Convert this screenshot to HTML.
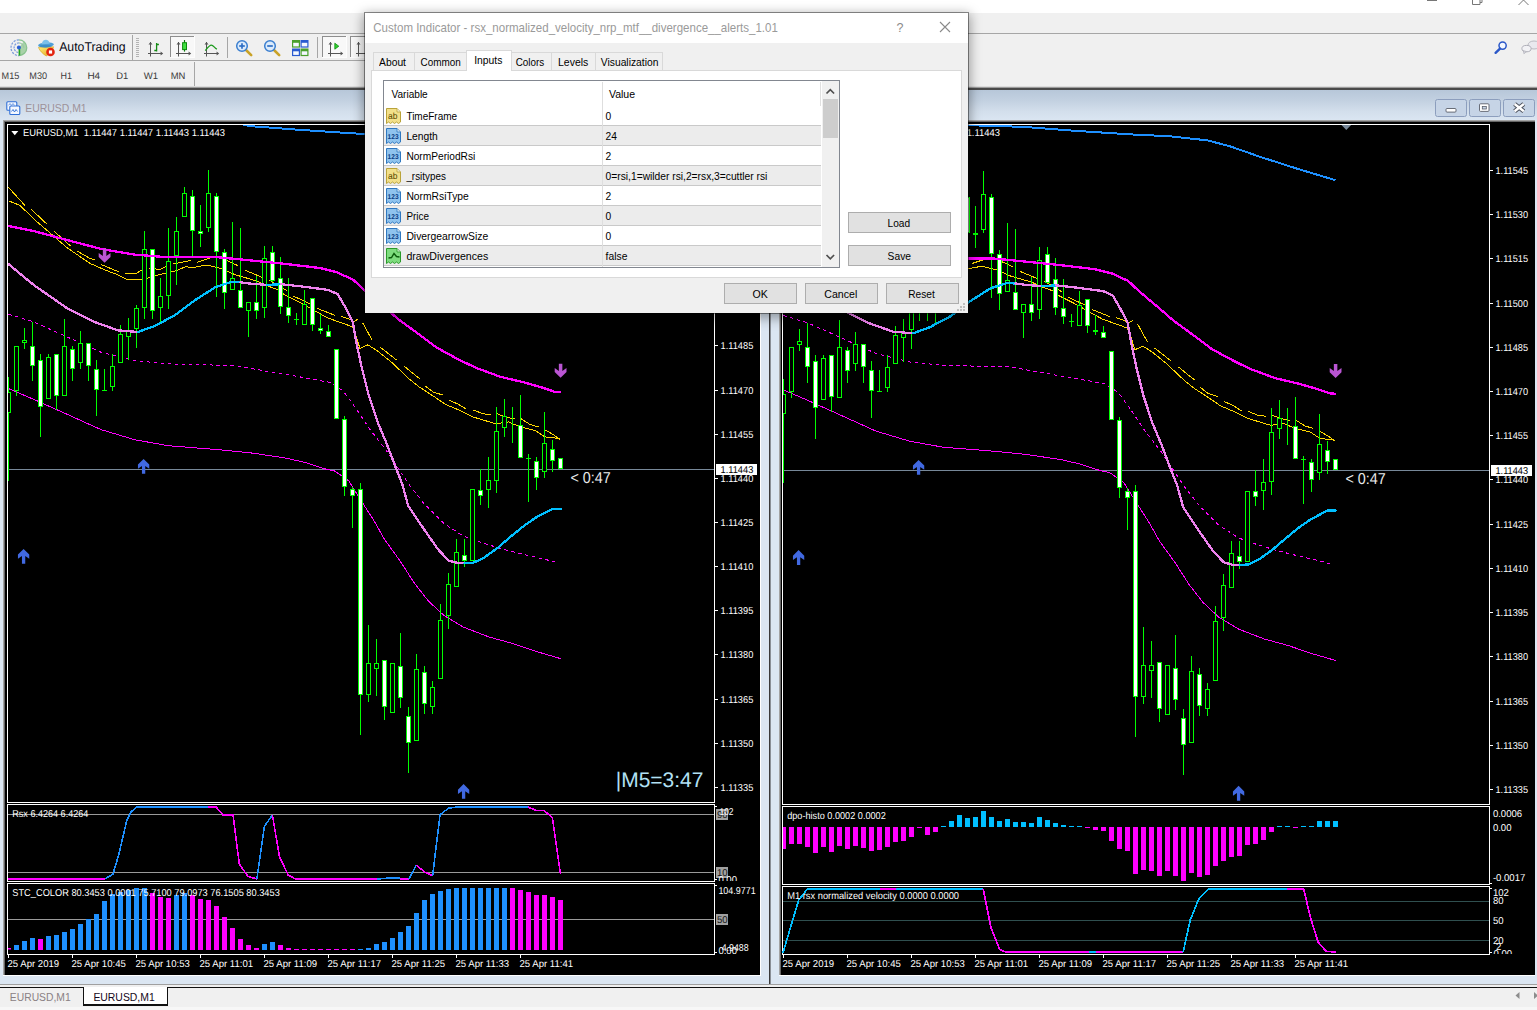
<!DOCTYPE html>
<html><head><meta charset="utf-8"><title>MetaTrader 4 - EURUSD,M1</title>
<style>
html,body{margin:0;padding:0;}
body{width:1537px;height:1010px;overflow:hidden;background:#f0f0f0;font-family:"Liberation Sans",sans-serif;position:relative;}
.t{position:absolute;white-space:pre;}
.abs{position:absolute;}
svg{position:absolute;left:0;top:0;}
svg text{font-family:"Liberation Sans",sans-serif;white-space:pre;text-rendering:geometricPrecision;}
.btn{position:absolute;box-sizing:border-box;border:1px solid #adadad;background:#e1e1e1;}
.tab{position:absolute;box-sizing:border-box;border:1px solid #d9d9d9;border-bottom:none;background:#f0f0f0;}
.row{position:absolute;left:384px;width:437px;height:19px;}
.row.g{background:#efefef;border-top:1px solid #dcdcdc;border-bottom:1px solid #dcdcdc;height:19px;box-sizing:content-box;margin-top:-1px;}
</style></head><body>

<div class="abs" style="left:0;top:0;width:1537px;height:13px;background:#fff"></div>
<div class="abs" style="left:0;top:33px;width:1537px;height:1px;background:#a6a6a6"></div>
<div class="abs" style="left:0;top:60px;width:700px;height:1px;background:#a6a6a6"></div>
<div class="abs" style="left:0;top:86px;width:1537px;height:1px;background:#dcdcdc"></div>
<div class="abs" style="left:0;top:87px;width:1537px;height:1px;background:#9c9c9c"></div>
<div class="abs" style="left:0;top:88px;width:1537px;height:2px;background:#4a4a4a"></div>
<div class="abs" style="left:0;top:90px;width:769px;height:894px;background:#dbe6f2"></div>
<div class="abs" style="left:0;top:90px;width:769px;height:31px;background:linear-gradient(#b7c7d9 0%,#c3d1e1 35%,#d3dfec 70%,#dbe6f2 100%)"></div>
<div class="abs" style="left:769px;top:90px;width:1px;height:896px;background:#3a3a3a"></div>
<div class="abs" style="left:770px;top:90px;width:1px;height:896px;background:#8a8f96"></div>
<div class="abs" style="left:771px;top:90px;width:766px;height:894px;background:#dbe6f2"></div>
<div class="abs" style="left:771px;top:90px;width:766px;height:31px;background:linear-gradient(#b7c7d9 0%,#c3d1e1 35%,#d3dfec 70%,#dbe6f2 100%)"></div>
<div class="abs" style="left:3px;top:120px;width:758px;height:856px;background:#a3a3a3"></div>
<div class="abs" style="left:4px;top:121px;width:757px;height:855px;background:#666666"></div>
<div class="abs" style="left:3px;top:975px;width:758px;height:1px;background:#fff"></div>
<div class="abs" style="left:760px;top:120px;width:1px;height:856px;background:#fff"></div>
<div class="abs" style="left:5px;top:122px;width:755px;height:853px;background:#000"></div>
<div class="abs" style="left:779px;top:120px;width:758px;height:856px;background:#a3a3a3"></div>
<div class="abs" style="left:780px;top:121px;width:757px;height:855px;background:#666666"></div>
<div class="abs" style="left:779px;top:975px;width:758px;height:1px;background:#fff"></div>
<div class="abs" style="left:781px;top:122px;width:754px;height:853px;background:#000"></div>
<div class="abs" style="left:1535px;top:120px;width:2px;height:856px;background:#dbe6f2"></div>
<div class="abs" style="left:0;top:984px;width:1537px;height:1px;background:#a0a0a0"></div>
<div class="abs" style="left:0;top:985px;width:1537px;height:25px;background:#f0f0f0"></div>
<div class="abs" style="left:0;top:987px;width:1537px;height:1px;background:#111"></div>
<div class="abs" style="left:83px;top:987px;width:85px;height:19px;box-sizing:border-box;background:#fff;border:1px solid #111;border-top:none;border-width:0 1px 2px 1px"></div>
<div class="abs" style="left:0;top:1007px;width:1537px;height:3px;background:#f7f7f7"></div>
<span class="t" style="left:9.80px;top:992px;font-size:10.357px;line-height:11px;height:11px;color:#8a8084;transform:scaleY(1.1297);transform-origin:0 9px;">EURUSD,M1</span>
<span class="t" style="left:93.40px;top:992px;font-size:10.425px;line-height:11px;height:11px;color:#150820;transform:scaleY(1.1223);transform-origin:0 9px;">EURUSD,M1</span>
<svg width="1537" height="1010" viewBox="0 0 1537 1010" style="pointer-events:none">
<path d="M1519.5,992 l-4,3.5 l4,3.5z" fill="#8c8c8c"/><path d="M1534,992 l4,3.5 l-4,3.5z" fill="#8c8c8c"/>
</svg>
<span class="t" style="left:25.20px;top:103px;font-size:10.442px;line-height:11px;height:11px;color:#9d9299;transform:scaleY(1.0918);transform-origin:0 9px;">EURUSD,M1</span>
<svg width="1537" height="1010" viewBox="0 0 1537 1010">
<defs><clipPath id="cl"><rect x="8" y="125" width="706" height="677"/></clipPath><clipPath id="cr"><rect x="783" y="125" width="706" height="679"/></clipPath></defs>
<g clip-path="url(#cl)">
<rect x="8.00" y="469.00" width="706.00" height="1.00" fill="#778899" />
<polyline points="8.4,388.5 33.6,399.3 67.3,414.4 101.0,429.6 134.6,439.7 168.2,445.7 218.7,449.7 252.4,453.1 286.0,458.1 305.0,462.4 325.0,468.9 334.9,471.1 348.8,481.0 360.6,499.8 374.5,521.5 384.4,539.3 400.2,561.1 414.1,582.8 428.0,600.6 443.8,615.4 463.6,627.2 489.4,637.1 513.2,643.6 535.0,651.1 560.6,658.6" fill="none" stroke="#ff00ff" stroke-width="1" shape-rendering="crispEdges" />
<polyline points="8.4,314.1 33.6,321.9 67.3,337.0 101.0,352.2 134.6,360.6 168.2,363.9 235.5,365.6 269.2,371.7 302.8,377.4 329.7,382.4 343.2,390.9 356.7,409.4 370.1,429.6 387.0,451.4 394.3,462.2 410.1,485.9 424.0,503.7 443.8,523.4 463.6,536.3 483.4,543.3 503.2,549.2 525.0,554.7 545.0,559.3 559.0,563.2" fill="none" stroke="#ff00ff" stroke-width="1" stroke-dasharray="3.5 3.5" shape-rendering="crispEdges" />
<polyline points="8.4,200.8 20.0,205.4 34.5,219.6 67.3,247.9 90.0,263.4 106.0,270.4 117.8,274.8 126.7,279.2 144.6,279.2 158.8,274.8 174.9,271.2 185.5,266.7 192.7,267.6 206.9,265.0 221.2,268.5 235.4,274.8 256.8,281.0 265.2,285.1 277.7,289.6 284.8,294.9 299.1,302.0 313.3,310.0 327.6,317.9 345.4,324.2 352.5,326.9 356.3,336.8 359.9,348.4 367.9,344.8 377.7,351.1 391.9,362.6 409.8,379.5 418.7,386.6 436.5,398.2 445.4,404.4 460.8,410.8 473.5,417.1 495.7,423.8 508.4,421.9 519.5,426.6 535.3,430.6 544.8,436.9 559.0,438.5" fill="none" stroke="#ffd700" stroke-width="1" shape-rendering="crispEdges" />
<polyline points="8.4,187.3 25.0,205.6" fill="none" stroke="#ffd700" stroke-width="1" shape-rendering="crispEdges" />
<polyline points="31.3,209.3 47.1,224.3" fill="none" stroke="#ffd700" stroke-width="1" shape-rendering="crispEdges" />
<polyline points="53.8,231.0 70.7,246.2" fill="none" stroke="#ffd700" stroke-width="1" shape-rendering="crispEdges" />
<polyline points="77.4,251.2 90.0,258.5 95.0,259.6" fill="none" stroke="#ffd700" stroke-width="1" shape-rendering="crispEdges" />
<polyline points="101.0,264.5 115.2,270.4 119.4,271.8" fill="none" stroke="#ffd700" stroke-width="1" shape-rendering="crispEdges" />
<polyline points="125.0,273.3 135.6,273.9 142.8,269.4" fill="none" stroke="#ffd700" stroke-width="1" shape-rendering="crispEdges" />
<polyline points="149.0,268.5 160.6,269.4 166.8,265.8" fill="none" stroke="#ffd700" stroke-width="1" shape-rendering="crispEdges" />
<polyline points="173.0,264.0 190.9,260.5" fill="none" stroke="#ffd700" stroke-width="1" shape-rendering="crispEdges" />
<polyline points="197.1,262.3 214.0,256.6" fill="none" stroke="#ffd700" stroke-width="1" shape-rendering="crispEdges" />
<polyline points="221.2,257.8 238.1,265.8" fill="none" stroke="#ffd700" stroke-width="1" shape-rendering="crispEdges" />
<polyline points="245.3,270.3 262.2,277.4" fill="none" stroke="#ffd700" stroke-width="1" shape-rendering="crispEdges" />
<polyline points="268.8,279.8 286.6,290.5" fill="none" stroke="#ffd700" stroke-width="1" shape-rendering="crispEdges" />
<polyline points="292.8,295.8 309.8,303.7" fill="none" stroke="#ffd700" stroke-width="1" shape-rendering="crispEdges" />
<polyline points="316.9,308.2 334.7,315.3" fill="none" stroke="#ffd700" stroke-width="1" shape-rendering="crispEdges" />
<polyline points="340.9,316.2 349.2,319.0 353.6,321.7 358.1,319.0" fill="none" stroke="#ffd700" stroke-width="1" shape-rendering="crispEdges" />
<polyline points="362.5,322.6 367.0,330.7 372.3,340.4" fill="none" stroke="#ffd700" stroke-width="1" shape-rendering="crispEdges" />
<polyline points="379.5,346.6 396.4,359.9" fill="none" stroke="#ffd700" stroke-width="1" shape-rendering="crispEdges" />
<polyline points="403.5,365.6 412.0,372.6 419.6,378.6" fill="none" stroke="#ffd700" stroke-width="1" shape-rendering="crispEdges" />
<polyline points="424.9,385.7 433.0,392.0 442.7,395.0" fill="none" stroke="#ffd700" stroke-width="1" shape-rendering="crispEdges" />
<polyline points="449.0,400.0 458.0,404.1 466.4,409.2" fill="none" stroke="#ffd700" stroke-width="1" shape-rendering="crispEdges" />
<polyline points="473.5,410.0 483.0,413.8 491.0,414.7" fill="none" stroke="#ffd700" stroke-width="1" shape-rendering="crispEdges" />
<polyline points="497.3,413.9 506.0,417.0 514.7,419.0" fill="none" stroke="#ffd700" stroke-width="1" shape-rendering="crispEdges" />
<polyline points="521.0,418.7 530.0,424.5 538.5,426.9" fill="none" stroke="#ffd700" stroke-width="1" shape-rendering="crispEdges" />
<polyline points="544.8,429.8 553.0,434.5 559.8,439.3" fill="none" stroke="#ffd700" stroke-width="1" shape-rendering="crispEdges" />
<rect x="8.00" y="377.00" width="1.00" height="104.00" fill="#00ff00" />
<rect x="6.00" y="392.00" width="5.00" height="21.00" fill="#00ff00" />
<rect x="7.00" y="393.00" width="3.00" height="19.00" fill="#000" />
<rect x="16.00" y="346.00" width="1.00" height="50.00" fill="#00ff00" />
<rect x="14.00" y="346.00" width="5.00" height="45.00" fill="#00ff00" />
<rect x="15.00" y="347.00" width="3.00" height="43.00" fill="#000" />
<rect x="24.00" y="328.00" width="1.00" height="21.00" fill="#00ff00" />
<rect x="22.00" y="340.00" width="5.00" height="3.00" fill="#00ff00" />
<rect x="23.00" y="341.00" width="3.00" height="1.00" fill="#000" />
<rect x="32.00" y="322.00" width="1.00" height="59.00" fill="#00ff00" />
<rect x="30.00" y="346.00" width="5.00" height="20.00" fill="#00ff00" />
<rect x="31.00" y="347.00" width="3.00" height="18.00" fill="#fff" />
<rect x="40.00" y="354.00" width="1.00" height="83.00" fill="#00ff00" />
<rect x="38.00" y="360.00" width="5.00" height="47.00" fill="#00ff00" />
<rect x="39.00" y="361.00" width="3.00" height="45.00" fill="#fff" />
<rect x="48.00" y="354.00" width="1.00" height="45.00" fill="#00ff00" />
<rect x="46.00" y="357.00" width="5.00" height="42.00" fill="#00ff00" />
<rect x="47.00" y="358.00" width="3.00" height="40.00" fill="#000" />
<rect x="56.00" y="354.00" width="1.00" height="56.00" fill="#00ff00" />
<rect x="54.00" y="354.00" width="5.00" height="42.00" fill="#00ff00" />
<rect x="55.00" y="355.00" width="3.00" height="40.00" fill="#fff" />
<rect x="64.00" y="319.00" width="1.00" height="77.00" fill="#00ff00" />
<rect x="62.00" y="346.00" width="5.00" height="50.00" fill="#00ff00" />
<rect x="63.00" y="347.00" width="3.00" height="48.00" fill="#000" />
<rect x="72.00" y="346.00" width="1.00" height="35.00" fill="#00ff00" />
<rect x="70.00" y="349.00" width="5.00" height="20.00" fill="#00ff00" />
<rect x="71.00" y="350.00" width="3.00" height="18.00" fill="#fff" />
<rect x="80.00" y="331.00" width="1.00" height="38.00" fill="#00ff00" />
<rect x="78.00" y="343.00" width="5.00" height="20.00" fill="#00ff00" />
<rect x="79.00" y="344.00" width="3.00" height="18.00" fill="#000" />
<rect x="88.00" y="343.00" width="1.00" height="38.00" fill="#00ff00" />
<rect x="86.00" y="343.00" width="5.00" height="23.00" fill="#00ff00" />
<rect x="87.00" y="344.00" width="3.00" height="21.00" fill="#fff" />
<rect x="96.00" y="360.00" width="1.00" height="56.00" fill="#00ff00" />
<rect x="94.00" y="369.00" width="5.00" height="21.00" fill="#00ff00" />
<rect x="95.00" y="370.00" width="3.00" height="19.00" fill="#fff" />
<rect x="104.00" y="369.00" width="1.00" height="21.00" fill="#00ff00" />
<rect x="102.00" y="390.00" width="5.00" height="1.00" fill="#00ff00" />
<rect x="112.00" y="354.00" width="1.00" height="37.00" fill="#00ff00" />
<rect x="110.00" y="366.00" width="5.00" height="21.00" fill="#00ff00" />
<rect x="111.00" y="367.00" width="3.00" height="19.00" fill="#000" />
<rect x="120.00" y="325.00" width="1.00" height="38.00" fill="#00ff00" />
<rect x="118.00" y="334.00" width="5.00" height="29.00" fill="#00ff00" />
<rect x="119.00" y="335.00" width="3.00" height="27.00" fill="#000" />
<rect x="128.00" y="318.00" width="1.00" height="42.00" fill="#00ff00" />
<rect x="126.00" y="331.00" width="5.00" height="6.00" fill="#00ff00" />
<rect x="127.00" y="332.00" width="3.00" height="4.00" fill="#000" />
<rect x="136.00" y="305.00" width="1.00" height="43.00" fill="#00ff00" />
<rect x="134.00" y="308.00" width="5.00" height="21.00" fill="#00ff00" />
<rect x="135.00" y="309.00" width="3.00" height="19.00" fill="#000" />
<rect x="144.00" y="231.00" width="1.00" height="88.00" fill="#00ff00" />
<rect x="142.00" y="249.00" width="5.00" height="59.00" fill="#00ff00" />
<rect x="143.00" y="250.00" width="3.00" height="57.00" fill="#000" />
<rect x="152.00" y="249.00" width="1.00" height="70.00" fill="#00ff00" />
<rect x="150.00" y="249.00" width="5.00" height="62.00" fill="#00ff00" />
<rect x="151.00" y="250.00" width="3.00" height="60.00" fill="#fff" />
<rect x="160.00" y="278.00" width="1.00" height="45.00" fill="#00ff00" />
<rect x="158.00" y="296.00" width="5.00" height="12.00" fill="#00ff00" />
<rect x="159.00" y="297.00" width="3.00" height="10.00" fill="#000" />
<rect x="168.00" y="228.00" width="1.00" height="81.00" fill="#00ff00" />
<rect x="166.00" y="261.00" width="5.00" height="35.00" fill="#00ff00" />
<rect x="167.00" y="262.00" width="3.00" height="33.00" fill="#000" />
<rect x="176.00" y="217.00" width="1.00" height="68.00" fill="#00ff00" />
<rect x="174.00" y="231.00" width="5.00" height="25.00" fill="#00ff00" />
<rect x="175.00" y="232.00" width="3.00" height="23.00" fill="#000" />
<rect x="184.00" y="187.00" width="1.00" height="30.00" fill="#00ff00" />
<rect x="182.00" y="193.00" width="5.00" height="24.00" fill="#00ff00" />
<rect x="183.00" y="194.00" width="3.00" height="22.00" fill="#000" />
<rect x="192.00" y="190.00" width="1.00" height="66.00" fill="#00ff00" />
<rect x="190.00" y="196.00" width="5.00" height="35.00" fill="#00ff00" />
<rect x="191.00" y="197.00" width="3.00" height="33.00" fill="#fff" />
<rect x="200.00" y="205.00" width="1.00" height="42.00" fill="#00ff00" />
<rect x="198.00" y="231.00" width="5.00" height="3.00" fill="#00ff00" />
<rect x="199.00" y="232.00" width="3.00" height="1.00" fill="#fff" />
<rect x="208.00" y="170.00" width="1.00" height="62.00" fill="#00ff00" />
<rect x="206.00" y="193.00" width="5.00" height="35.00" fill="#00ff00" />
<rect x="207.00" y="194.00" width="3.00" height="33.00" fill="#000" />
<rect x="216.00" y="193.00" width="1.00" height="104.00" fill="#00ff00" />
<rect x="214.00" y="196.00" width="5.00" height="56.00" fill="#00ff00" />
<rect x="215.00" y="197.00" width="3.00" height="54.00" fill="#fff" />
<rect x="224.00" y="249.00" width="1.00" height="60.00" fill="#00ff00" />
<rect x="222.00" y="252.00" width="5.00" height="41.00" fill="#00ff00" />
<rect x="223.00" y="253.00" width="3.00" height="39.00" fill="#fff" />
<rect x="232.00" y="222.00" width="1.00" height="68.00" fill="#00ff00" />
<rect x="230.00" y="278.00" width="5.00" height="12.00" fill="#00ff00" />
<rect x="231.00" y="279.00" width="3.00" height="10.00" fill="#000" />
<rect x="240.00" y="228.00" width="1.00" height="80.00" fill="#00ff00" />
<rect x="238.00" y="290.00" width="5.00" height="18.00" fill="#00ff00" />
<rect x="239.00" y="291.00" width="3.00" height="16.00" fill="#fff" />
<rect x="248.00" y="302.00" width="1.00" height="35.00" fill="#00ff00" />
<rect x="246.00" y="302.00" width="5.00" height="9.00" fill="#00ff00" />
<rect x="247.00" y="303.00" width="3.00" height="7.00" fill="#000" />
<rect x="256.00" y="276.00" width="1.00" height="43.00" fill="#00ff00" />
<rect x="254.00" y="302.00" width="5.00" height="9.00" fill="#00ff00" />
<rect x="255.00" y="303.00" width="3.00" height="7.00" fill="#fff" />
<rect x="264.00" y="246.00" width="1.00" height="72.00" fill="#00ff00" />
<rect x="262.00" y="258.00" width="5.00" height="50.00" fill="#00ff00" />
<rect x="263.00" y="259.00" width="3.00" height="48.00" fill="#000" />
<rect x="272.00" y="246.00" width="1.00" height="36.00" fill="#00ff00" />
<rect x="270.00" y="252.00" width="5.00" height="29.00" fill="#00ff00" />
<rect x="271.00" y="253.00" width="3.00" height="27.00" fill="#fff" />
<rect x="280.00" y="257.00" width="1.00" height="57.00" fill="#00ff00" />
<rect x="278.00" y="278.00" width="5.00" height="29.00" fill="#00ff00" />
<rect x="279.00" y="279.00" width="3.00" height="27.00" fill="#fff" />
<rect x="288.00" y="278.00" width="1.00" height="45.00" fill="#00ff00" />
<rect x="286.00" y="307.00" width="5.00" height="9.00" fill="#00ff00" />
<rect x="287.00" y="308.00" width="3.00" height="7.00" fill="#fff" />
<rect x="296.00" y="313.00" width="1.00" height="12.00" fill="#00ff00" />
<rect x="294.00" y="319.00" width="5.00" height="1.00" fill="#00ff00" />
<rect x="304.00" y="290.00" width="1.00" height="35.00" fill="#00ff00" />
<rect x="302.00" y="304.00" width="5.00" height="21.00" fill="#00ff00" />
<rect x="303.00" y="305.00" width="3.00" height="19.00" fill="#000" />
<rect x="312.00" y="298.00" width="1.00" height="33.00" fill="#00ff00" />
<rect x="310.00" y="298.00" width="5.00" height="27.00" fill="#00ff00" />
<rect x="311.00" y="299.00" width="3.00" height="25.00" fill="#fff" />
<rect x="320.00" y="314.00" width="1.00" height="20.00" fill="#00ff00" />
<rect x="318.00" y="328.00" width="5.00" height="3.00" fill="#00ff00" />
<rect x="319.00" y="329.00" width="3.00" height="1.00" fill="#fff" />
<rect x="328.00" y="325.00" width="1.00" height="12.00" fill="#00ff00" />
<rect x="326.00" y="331.00" width="5.00" height="6.00" fill="#00ff00" />
<rect x="327.00" y="332.00" width="3.00" height="4.00" fill="#fff" />
<rect x="336.00" y="349.00" width="1.00" height="70.00" fill="#00ff00" />
<rect x="334.00" y="349.00" width="5.00" height="70.00" fill="#00ff00" />
<rect x="335.00" y="350.00" width="3.00" height="68.00" fill="#fff" />
<rect x="344.00" y="416.00" width="1.00" height="80.00" fill="#00ff00" />
<rect x="342.00" y="419.00" width="5.00" height="68.00" fill="#00ff00" />
<rect x="343.00" y="420.00" width="3.00" height="66.00" fill="#fff" />
<rect x="352.00" y="487.00" width="1.00" height="41.00" fill="#00ff00" />
<rect x="350.00" y="489.00" width="5.00" height="7.00" fill="#00ff00" />
<rect x="351.00" y="490.00" width="3.00" height="5.00" fill="#fff" />
<rect x="360.00" y="483.00" width="1.00" height="252.00" fill="#00ff00" />
<rect x="358.00" y="489.00" width="5.00" height="206.00" fill="#00ff00" />
<rect x="359.00" y="490.00" width="3.00" height="204.00" fill="#fff" />
<rect x="368.00" y="625.00" width="1.00" height="77.00" fill="#00ff00" />
<rect x="366.00" y="663.00" width="5.00" height="32.00" fill="#00ff00" />
<rect x="367.00" y="664.00" width="3.00" height="30.00" fill="#000" />
<rect x="376.00" y="639.00" width="1.00" height="57.00" fill="#00ff00" />
<rect x="374.00" y="663.00" width="5.00" height="6.00" fill="#00ff00" />
<rect x="375.00" y="664.00" width="3.00" height="4.00" fill="#000" />
<rect x="384.00" y="660.00" width="1.00" height="60.00" fill="#00ff00" />
<rect x="382.00" y="660.00" width="5.00" height="47.00" fill="#00ff00" />
<rect x="383.00" y="661.00" width="3.00" height="45.00" fill="#fff" />
<rect x="392.00" y="663.00" width="1.00" height="50.00" fill="#00ff00" />
<rect x="390.00" y="663.00" width="5.00" height="50.00" fill="#00ff00" />
<rect x="391.00" y="664.00" width="3.00" height="48.00" fill="#000" />
<rect x="400.00" y="633.00" width="1.00" height="75.00" fill="#00ff00" />
<rect x="398.00" y="666.00" width="5.00" height="32.00" fill="#00ff00" />
<rect x="399.00" y="667.00" width="3.00" height="30.00" fill="#fff" />
<rect x="408.00" y="707.00" width="1.00" height="66.00" fill="#00ff00" />
<rect x="406.00" y="716.00" width="5.00" height="27.00" fill="#00ff00" />
<rect x="407.00" y="717.00" width="3.00" height="25.00" fill="#fff" />
<rect x="416.00" y="654.00" width="1.00" height="87.00" fill="#00ff00" />
<rect x="414.00" y="669.00" width="5.00" height="72.00" fill="#00ff00" />
<rect x="415.00" y="670.00" width="3.00" height="70.00" fill="#000" />
<rect x="424.00" y="666.00" width="1.00" height="48.00" fill="#00ff00" />
<rect x="422.00" y="672.00" width="5.00" height="32.00" fill="#00ff00" />
<rect x="423.00" y="673.00" width="3.00" height="30.00" fill="#fff" />
<rect x="432.00" y="681.00" width="1.00" height="33.00" fill="#00ff00" />
<rect x="430.00" y="687.00" width="5.00" height="20.00" fill="#00ff00" />
<rect x="431.00" y="688.00" width="3.00" height="18.00" fill="#000" />
<rect x="440.00" y="604.00" width="1.00" height="75.00" fill="#00ff00" />
<rect x="438.00" y="620.00" width="5.00" height="59.00" fill="#00ff00" />
<rect x="439.00" y="621.00" width="3.00" height="57.00" fill="#000" />
<rect x="448.00" y="573.00" width="1.00" height="56.00" fill="#00ff00" />
<rect x="446.00" y="584.00" width="5.00" height="32.00" fill="#00ff00" />
<rect x="447.00" y="585.00" width="3.00" height="30.00" fill="#000" />
<rect x="456.00" y="539.00" width="1.00" height="48.00" fill="#00ff00" />
<rect x="454.00" y="552.00" width="5.00" height="35.00" fill="#00ff00" />
<rect x="455.00" y="553.00" width="3.00" height="33.00" fill="#000" />
<rect x="464.00" y="539.00" width="1.00" height="28.00" fill="#00ff00" />
<rect x="462.00" y="555.00" width="5.00" height="6.00" fill="#00ff00" />
<rect x="463.00" y="556.00" width="3.00" height="4.00" fill="#fff" />
<rect x="472.00" y="489.00" width="1.00" height="72.00" fill="#00ff00" />
<rect x="470.00" y="489.00" width="5.00" height="72.00" fill="#00ff00" />
<rect x="471.00" y="490.00" width="3.00" height="70.00" fill="#000" />
<rect x="480.00" y="469.00" width="1.00" height="36.00" fill="#00ff00" />
<rect x="478.00" y="490.00" width="5.00" height="6.00" fill="#00ff00" />
<rect x="479.00" y="491.00" width="3.00" height="4.00" fill="#fff" />
<rect x="488.00" y="457.00" width="1.00" height="51.00" fill="#00ff00" />
<rect x="486.00" y="480.00" width="5.00" height="10.00" fill="#00ff00" />
<rect x="487.00" y="481.00" width="3.00" height="8.00" fill="#000" />
<rect x="496.00" y="407.00" width="1.00" height="86.00" fill="#00ff00" />
<rect x="494.00" y="431.00" width="5.00" height="50.00" fill="#00ff00" />
<rect x="495.00" y="432.00" width="3.00" height="48.00" fill="#000" />
<rect x="504.00" y="399.00" width="1.00" height="38.00" fill="#00ff00" />
<rect x="502.00" y="416.00" width="5.00" height="12.00" fill="#00ff00" />
<rect x="503.00" y="417.00" width="3.00" height="10.00" fill="#000" />
<rect x="512.00" y="407.00" width="1.00" height="36.00" fill="#00ff00" />
<rect x="520.00" y="395.00" width="1.00" height="63.00" fill="#00ff00" />
<rect x="518.00" y="425.00" width="5.00" height="33.00" fill="#00ff00" />
<rect x="519.00" y="426.00" width="3.00" height="31.00" fill="#fff" />
<rect x="528.00" y="454.00" width="1.00" height="48.00" fill="#00ff00" />
<rect x="526.00" y="458.00" width="5.00" height="1.00" fill="#00ff00" />
<rect x="536.00" y="457.00" width="1.00" height="33.00" fill="#00ff00" />
<rect x="534.00" y="461.00" width="5.00" height="17.00" fill="#00ff00" />
<rect x="535.00" y="462.00" width="3.00" height="15.00" fill="#fff" />
<rect x="544.00" y="412.00" width="1.00" height="66.00" fill="#00ff00" />
<rect x="542.00" y="443.00" width="5.00" height="29.00" fill="#00ff00" />
<rect x="543.00" y="444.00" width="3.00" height="27.00" fill="#000" />
<rect x="552.00" y="440.00" width="1.00" height="32.00" fill="#00ff00" />
<rect x="550.00" y="449.00" width="5.00" height="12.00" fill="#00ff00" />
<rect x="551.00" y="450.00" width="3.00" height="10.00" fill="#fff" />
<rect x="560.00" y="458.00" width="1.00" height="11.00" fill="#00ff00" />
<rect x="558.00" y="458.00" width="5.00" height="11.00" fill="#00ff00" />
<rect x="559.00" y="459.00" width="3.00" height="9.00" fill="#fff" />
<polyline points="243.0,124.4 248.8,126.0 297.6,129.7 353.9,133.4 395.2,135.4 432.7,139.5 455.3,145.4 485.3,155.9 522.8,167.9 560.4,179.2" fill="none" stroke="#1e90ff" stroke-width="2" shape-rendering="crispEdges" />
<polyline points="8.4,226.0 33.6,231.0 67.3,240.1 101.0,248.9 134.6,254.6 168.2,257.3 218.7,257.3 252.4,260.6 286.0,264.0 319.7,268.0 336.5,272.1 353.3,279.8 364.0,290.0 379.6,303.0 399.2,319.9 418.7,334.1 436.5,347.5 454.3,357.2 465.0,362.6 476.7,368.1 500.4,376.8 524.2,382.4 543.2,387.9 555.9,392.2 560.6,392.3" fill="none" stroke="#ff00ff" stroke-width="2.3" shape-rendering="crispEdges" stroke-linejoin="round"/>
<polyline points="8.4,264.0 33.6,284.9 67.3,308.4 94.2,321.9 117.8,330.3 138.0,332.0" fill="none" stroke="#ee82ee" stroke-width="2.3" shape-rendering="crispEdges" stroke-linejoin="round" stroke-linecap="round"/>
<polyline points="138.0,332.0 154.8,325.9 175.0,315.2 195.2,300.0 215.3,287.2 232.0,281.8 240.5,282.3" fill="none" stroke="#00bfff" stroke-width="2.3" shape-rendering="crispEdges" stroke-linejoin="round" stroke-linecap="round"/>
<polyline points="240.5,282.3 250.0,283.6 267.0,284.9" fill="none" stroke="#ee82ee" stroke-width="2.3" shape-rendering="crispEdges" stroke-linejoin="round" stroke-linecap="round"/>
<polyline points="267.0,284.9 281.2,284.2" fill="none" stroke="#00bfff" stroke-width="2.3" shape-rendering="crispEdges" stroke-linejoin="round" stroke-linecap="round"/>
<polyline points="281.2,284.2 302.8,286.6 328.0,289.9 337.6,294.1 345.0,306.7 352.7,321.7 356.3,342.2 361.6,367.0 368.8,395.6 377.7,422.2 386.6,443.5 394.4,464.1 402.2,483.9 408.2,505.7 424.0,529.3 437.9,549.2 448.8,560.7 457.7,563.0 464.6,563.3" fill="none" stroke="#ee82ee" stroke-width="2.3" shape-rendering="crispEdges" stroke-linejoin="round" stroke-linecap="round"/>
<polyline points="464.6,563.3 473.5,562.7 483.4,558.1 497.3,548.2 511.1,536.3 525.0,525.0 536.0,517.5 552.7,508.9 560.6,508.9" fill="none" stroke="#00bfff" stroke-width="2.3" shape-rendering="crispEdges" stroke-linejoin="round" stroke-linecap="round"/>
<path d="M104.60,262.80 l-5.9,-5.7 v-4.15 l4.15,2.95 v-7.1 h3.5 v7.1 l4.15,-2.95 v4.15z" fill="#ba55d3"/>
<path d="M143.60,458.90 l-5.65,5.65 v4.3 l4,-2.8 v7.7 h3.3 v-7.7 l4,2.8 v-4.3z" fill="#4169e1"/>
<path d="M23.60,548.90 l-5.65,5.65 v4.3 l4,-2.8 v7.7 h3.3 v-7.7 l4,2.8 v-4.3z" fill="#4169e1"/>
<path d="M463.60,784.00 l-5.65,5.65 v4.3 l4,-2.8 v7.7 h3.3 v-7.7 l4,2.8 v-4.3z" fill="#4169e1"/>
<path d="M560.60,377.80 l-5.9,-5.7 v-4.15 l4.15,2.95 v-7.1 h3.5 v7.1 l4.15,-2.95 v4.15z" fill="#ba55d3"/>
</g>
<g clip-path="url(#cr)">
<rect x="783.00" y="470.00" width="706.00" height="1.00" fill="#778899" />
<polyline points="783.4,389.9 808.6,400.7 842.3,415.9 876.0,431.1 909.6,441.2 943.2,447.2 993.7,451.2 1027.4,454.6 1061.0,459.6 1080.0,464.0 1100.0,470.5 1109.9,472.7 1123.8,482.6 1135.6,501.4 1149.5,523.2 1159.4,541.0 1175.2,562.8 1189.1,584.6 1203.0,602.4 1218.8,617.2 1238.6,629.1 1264.4,639.0 1288.2,645.5 1310.0,653.0 1335.6,660.5" fill="none" stroke="#ff00ff" stroke-width="1" shape-rendering="crispEdges" />
<polyline points="783.4,315.4 808.6,323.2 842.3,338.3 876.0,353.5 909.6,362.0 943.2,365.3 1010.5,367.0 1044.2,373.1 1077.8,378.8 1104.7,383.8 1118.2,392.3 1131.7,410.9 1145.1,431.1 1162.0,452.9 1169.3,463.8 1185.1,487.5 1199.0,505.3 1218.8,525.1 1238.6,538.0 1258.4,545.0 1278.2,550.9 1300.0,556.4 1320.0,561.0 1334.0,565.0" fill="none" stroke="#ff00ff" stroke-width="1" stroke-dasharray="3.5 3.5" shape-rendering="crispEdges" />
<polyline points="783.4,201.9 795.0,206.5 809.5,220.7 842.3,249.0 865.0,264.6 881.0,271.6 892.8,276.0 901.7,280.4 919.6,280.4 933.8,276.0 949.9,272.4 960.5,267.9 967.7,268.8 981.9,266.2 996.2,269.7 1010.4,276.0 1031.8,282.2 1040.2,286.3 1052.7,290.8 1059.8,296.1 1074.1,303.3 1088.3,311.3 1102.6,319.2 1120.4,325.5 1127.5,328.2 1131.3,338.1 1134.9,349.7 1142.9,346.1 1152.7,352.4 1166.9,364.0 1184.8,380.9 1193.7,388.0 1211.5,399.6 1220.4,405.8 1235.8,412.3 1248.5,418.6 1270.7,425.3 1283.4,423.4 1294.5,428.1 1310.3,432.1 1319.8,438.4 1334.0,440.0" fill="none" stroke="#ffd700" stroke-width="1" shape-rendering="crispEdges" />
<polyline points="783.4,188.3 800.0,206.7" fill="none" stroke="#ffd700" stroke-width="1" shape-rendering="crispEdges" />
<polyline points="806.3,210.4 822.1,225.4" fill="none" stroke="#ffd700" stroke-width="1" shape-rendering="crispEdges" />
<polyline points="828.8,232.1 845.7,247.3" fill="none" stroke="#ffd700" stroke-width="1" shape-rendering="crispEdges" />
<polyline points="852.4,252.4 865.0,259.7 870.0,260.8" fill="none" stroke="#ffd700" stroke-width="1" shape-rendering="crispEdges" />
<polyline points="876.0,265.7 890.2,271.6 894.4,273.0" fill="none" stroke="#ffd700" stroke-width="1" shape-rendering="crispEdges" />
<polyline points="900.0,274.5 910.6,275.1 917.8,270.6" fill="none" stroke="#ffd700" stroke-width="1" shape-rendering="crispEdges" />
<polyline points="924.0,269.7 935.6,270.6 941.8,267.0" fill="none" stroke="#ffd700" stroke-width="1" shape-rendering="crispEdges" />
<polyline points="948.0,265.2 965.9,261.7" fill="none" stroke="#ffd700" stroke-width="1" shape-rendering="crispEdges" />
<polyline points="972.1,263.5 989.0,257.8" fill="none" stroke="#ffd700" stroke-width="1" shape-rendering="crispEdges" />
<polyline points="996.2,259.0 1013.1,267.0" fill="none" stroke="#ffd700" stroke-width="1" shape-rendering="crispEdges" />
<polyline points="1020.3,271.5 1037.2,278.6" fill="none" stroke="#ffd700" stroke-width="1" shape-rendering="crispEdges" />
<polyline points="1043.8,281.0 1061.6,291.7" fill="none" stroke="#ffd700" stroke-width="1" shape-rendering="crispEdges" />
<polyline points="1067.8,297.0 1084.8,305.0" fill="none" stroke="#ffd700" stroke-width="1" shape-rendering="crispEdges" />
<polyline points="1091.9,309.5 1109.7,316.6" fill="none" stroke="#ffd700" stroke-width="1" shape-rendering="crispEdges" />
<polyline points="1115.9,317.5 1124.2,320.3 1128.6,323.0 1133.1,320.3" fill="none" stroke="#ffd700" stroke-width="1" shape-rendering="crispEdges" />
<polyline points="1137.5,323.9 1142.0,332.0 1147.3,341.7" fill="none" stroke="#ffd700" stroke-width="1" shape-rendering="crispEdges" />
<polyline points="1154.5,347.9 1171.4,361.3" fill="none" stroke="#ffd700" stroke-width="1" shape-rendering="crispEdges" />
<polyline points="1178.5,367.0 1187.0,374.0 1194.6,380.0" fill="none" stroke="#ffd700" stroke-width="1" shape-rendering="crispEdges" />
<polyline points="1199.9,387.1 1208.0,393.4 1217.7,396.4" fill="none" stroke="#ffd700" stroke-width="1" shape-rendering="crispEdges" />
<polyline points="1224.0,401.4 1233.0,405.5 1241.4,410.7" fill="none" stroke="#ffd700" stroke-width="1" shape-rendering="crispEdges" />
<polyline points="1248.5,411.5 1258.0,415.3 1266.0,416.2" fill="none" stroke="#ffd700" stroke-width="1" shape-rendering="crispEdges" />
<polyline points="1272.3,415.4 1281.0,418.5 1289.7,420.5" fill="none" stroke="#ffd700" stroke-width="1" shape-rendering="crispEdges" />
<polyline points="1296.0,420.2 1305.0,426.0 1313.5,428.4" fill="none" stroke="#ffd700" stroke-width="1" shape-rendering="crispEdges" />
<polyline points="1319.8,431.3 1328.0,436.0 1334.8,440.8" fill="none" stroke="#ffd700" stroke-width="1" shape-rendering="crispEdges" />
<rect x="783.00" y="379.00" width="1.00" height="104.00" fill="#00ff00" />
<rect x="781.00" y="394.00" width="5.00" height="20.00" fill="#00ff00" />
<rect x="782.00" y="395.00" width="3.00" height="18.00" fill="#000" />
<rect x="791.00" y="347.00" width="1.00" height="51.00" fill="#00ff00" />
<rect x="789.00" y="347.00" width="5.00" height="45.00" fill="#00ff00" />
<rect x="790.00" y="348.00" width="3.00" height="43.00" fill="#000" />
<rect x="799.00" y="329.00" width="1.00" height="22.00" fill="#00ff00" />
<rect x="797.00" y="341.00" width="5.00" height="4.00" fill="#00ff00" />
<rect x="798.00" y="342.00" width="3.00" height="2.00" fill="#000" />
<rect x="807.00" y="323.00" width="1.00" height="60.00" fill="#00ff00" />
<rect x="805.00" y="347.00" width="5.00" height="20.00" fill="#00ff00" />
<rect x="806.00" y="348.00" width="3.00" height="18.00" fill="#fff" />
<rect x="815.00" y="355.00" width="1.00" height="84.00" fill="#00ff00" />
<rect x="813.00" y="361.00" width="5.00" height="47.00" fill="#00ff00" />
<rect x="814.00" y="362.00" width="3.00" height="45.00" fill="#fff" />
<rect x="823.00" y="355.00" width="1.00" height="45.00" fill="#00ff00" />
<rect x="821.00" y="358.00" width="5.00" height="42.00" fill="#00ff00" />
<rect x="822.00" y="359.00" width="3.00" height="40.00" fill="#000" />
<rect x="831.00" y="355.00" width="1.00" height="57.00" fill="#00ff00" />
<rect x="829.00" y="355.00" width="5.00" height="42.00" fill="#00ff00" />
<rect x="830.00" y="356.00" width="3.00" height="40.00" fill="#fff" />
<rect x="839.00" y="320.00" width="1.00" height="78.00" fill="#00ff00" />
<rect x="837.00" y="347.00" width="5.00" height="51.00" fill="#00ff00" />
<rect x="838.00" y="348.00" width="3.00" height="49.00" fill="#000" />
<rect x="847.00" y="347.00" width="1.00" height="36.00" fill="#00ff00" />
<rect x="845.00" y="350.00" width="5.00" height="21.00" fill="#00ff00" />
<rect x="846.00" y="351.00" width="3.00" height="19.00" fill="#fff" />
<rect x="855.00" y="332.00" width="1.00" height="39.00" fill="#00ff00" />
<rect x="853.00" y="344.00" width="5.00" height="20.00" fill="#00ff00" />
<rect x="854.00" y="345.00" width="3.00" height="18.00" fill="#000" />
<rect x="863.00" y="344.00" width="1.00" height="39.00" fill="#00ff00" />
<rect x="861.00" y="344.00" width="5.00" height="23.00" fill="#00ff00" />
<rect x="862.00" y="345.00" width="3.00" height="21.00" fill="#fff" />
<rect x="871.00" y="361.00" width="1.00" height="57.00" fill="#00ff00" />
<rect x="869.00" y="370.00" width="5.00" height="21.00" fill="#00ff00" />
<rect x="870.00" y="371.00" width="3.00" height="19.00" fill="#fff" />
<rect x="879.00" y="370.00" width="1.00" height="21.00" fill="#00ff00" />
<rect x="877.00" y="391.00" width="5.00" height="1.00" fill="#00ff00" />
<rect x="887.00" y="355.00" width="1.00" height="37.00" fill="#00ff00" />
<rect x="885.00" y="367.00" width="5.00" height="21.00" fill="#00ff00" />
<rect x="886.00" y="368.00" width="3.00" height="19.00" fill="#000" />
<rect x="895.00" y="326.00" width="1.00" height="38.00" fill="#00ff00" />
<rect x="893.00" y="335.00" width="5.00" height="29.00" fill="#00ff00" />
<rect x="894.00" y="336.00" width="3.00" height="27.00" fill="#000" />
<rect x="903.00" y="319.00" width="1.00" height="43.00" fill="#00ff00" />
<rect x="901.00" y="332.00" width="5.00" height="6.00" fill="#00ff00" />
<rect x="902.00" y="333.00" width="3.00" height="4.00" fill="#000" />
<rect x="911.00" y="306.00" width="1.00" height="43.00" fill="#00ff00" />
<rect x="909.00" y="310.00" width="5.00" height="20.00" fill="#00ff00" />
<rect x="910.00" y="311.00" width="3.00" height="18.00" fill="#000" />
<rect x="919.00" y="232.00" width="1.00" height="89.00" fill="#00ff00" />
<rect x="917.00" y="250.00" width="5.00" height="60.00" fill="#00ff00" />
<rect x="918.00" y="251.00" width="3.00" height="58.00" fill="#000" />
<rect x="927.00" y="250.00" width="1.00" height="71.00" fill="#00ff00" />
<rect x="925.00" y="250.00" width="5.00" height="63.00" fill="#00ff00" />
<rect x="926.00" y="251.00" width="3.00" height="61.00" fill="#fff" />
<rect x="935.00" y="280.00" width="1.00" height="44.00" fill="#00ff00" />
<rect x="933.00" y="298.00" width="5.00" height="12.00" fill="#00ff00" />
<rect x="934.00" y="299.00" width="3.00" height="10.00" fill="#000" />
<rect x="943.00" y="229.00" width="1.00" height="81.00" fill="#00ff00" />
<rect x="941.00" y="263.00" width="5.00" height="35.00" fill="#00ff00" />
<rect x="942.00" y="264.00" width="3.00" height="33.00" fill="#000" />
<rect x="951.00" y="218.00" width="1.00" height="68.00" fill="#00ff00" />
<rect x="949.00" y="232.00" width="5.00" height="25.00" fill="#00ff00" />
<rect x="950.00" y="233.00" width="3.00" height="23.00" fill="#000" />
<rect x="959.00" y="188.00" width="1.00" height="30.00" fill="#00ff00" />
<rect x="957.00" y="194.00" width="5.00" height="24.00" fill="#00ff00" />
<rect x="958.00" y="195.00" width="3.00" height="22.00" fill="#000" />
<rect x="967.00" y="191.00" width="1.00" height="66.00" fill="#00ff00" />
<rect x="965.00" y="197.00" width="5.00" height="36.00" fill="#00ff00" />
<rect x="966.00" y="198.00" width="3.00" height="34.00" fill="#fff" />
<rect x="975.00" y="206.00" width="1.00" height="42.00" fill="#00ff00" />
<rect x="973.00" y="233.00" width="5.00" height="2.00" fill="#00ff00" />
<rect x="983.00" y="171.00" width="1.00" height="62.00" fill="#00ff00" />
<rect x="981.00" y="194.00" width="5.00" height="36.00" fill="#00ff00" />
<rect x="982.00" y="195.00" width="3.00" height="34.00" fill="#000" />
<rect x="991.00" y="194.00" width="1.00" height="104.00" fill="#00ff00" />
<rect x="989.00" y="197.00" width="5.00" height="57.00" fill="#00ff00" />
<rect x="990.00" y="198.00" width="3.00" height="55.00" fill="#fff" />
<rect x="999.00" y="250.00" width="1.00" height="60.00" fill="#00ff00" />
<rect x="997.00" y="254.00" width="5.00" height="40.00" fill="#00ff00" />
<rect x="998.00" y="255.00" width="3.00" height="38.00" fill="#fff" />
<rect x="1007.00" y="223.00" width="1.00" height="69.00" fill="#00ff00" />
<rect x="1005.00" y="280.00" width="5.00" height="12.00" fill="#00ff00" />
<rect x="1006.00" y="281.00" width="3.00" height="10.00" fill="#000" />
<rect x="1015.00" y="229.00" width="1.00" height="81.00" fill="#00ff00" />
<rect x="1013.00" y="292.00" width="5.00" height="18.00" fill="#00ff00" />
<rect x="1014.00" y="293.00" width="3.00" height="16.00" fill="#fff" />
<rect x="1023.00" y="304.00" width="1.00" height="34.00" fill="#00ff00" />
<rect x="1021.00" y="304.00" width="5.00" height="9.00" fill="#00ff00" />
<rect x="1022.00" y="305.00" width="3.00" height="7.00" fill="#000" />
<rect x="1031.00" y="277.00" width="1.00" height="44.00" fill="#00ff00" />
<rect x="1029.00" y="304.00" width="5.00" height="9.00" fill="#00ff00" />
<rect x="1030.00" y="305.00" width="3.00" height="7.00" fill="#fff" />
<rect x="1039.00" y="247.00" width="1.00" height="72.00" fill="#00ff00" />
<rect x="1037.00" y="260.00" width="5.00" height="50.00" fill="#00ff00" />
<rect x="1038.00" y="261.00" width="3.00" height="48.00" fill="#000" />
<rect x="1047.00" y="247.00" width="1.00" height="36.00" fill="#00ff00" />
<rect x="1045.00" y="254.00" width="5.00" height="29.00" fill="#00ff00" />
<rect x="1046.00" y="255.00" width="3.00" height="27.00" fill="#fff" />
<rect x="1055.00" y="258.00" width="1.00" height="57.00" fill="#00ff00" />
<rect x="1053.00" y="279.00" width="5.00" height="29.00" fill="#00ff00" />
<rect x="1054.00" y="280.00" width="3.00" height="27.00" fill="#fff" />
<rect x="1063.00" y="279.00" width="1.00" height="45.00" fill="#00ff00" />
<rect x="1061.00" y="308.00" width="5.00" height="9.00" fill="#00ff00" />
<rect x="1062.00" y="309.00" width="3.00" height="7.00" fill="#fff" />
<rect x="1071.00" y="314.00" width="1.00" height="13.00" fill="#00ff00" />
<rect x="1069.00" y="321.00" width="5.00" height="1.00" fill="#00ff00" />
<rect x="1079.00" y="291.00" width="1.00" height="35.00" fill="#00ff00" />
<rect x="1077.00" y="305.00" width="5.00" height="21.00" fill="#00ff00" />
<rect x="1078.00" y="306.00" width="3.00" height="19.00" fill="#000" />
<rect x="1087.00" y="299.00" width="1.00" height="34.00" fill="#00ff00" />
<rect x="1085.00" y="299.00" width="5.00" height="27.00" fill="#00ff00" />
<rect x="1086.00" y="300.00" width="3.00" height="25.00" fill="#fff" />
<rect x="1095.00" y="315.00" width="1.00" height="20.00" fill="#00ff00" />
<rect x="1093.00" y="330.00" width="5.00" height="2.00" fill="#00ff00" />
<rect x="1103.00" y="326.00" width="1.00" height="12.00" fill="#00ff00" />
<rect x="1101.00" y="332.00" width="5.00" height="6.00" fill="#00ff00" />
<rect x="1102.00" y="333.00" width="3.00" height="4.00" fill="#fff" />
<rect x="1111.00" y="351.00" width="1.00" height="69.00" fill="#00ff00" />
<rect x="1109.00" y="351.00" width="5.00" height="69.00" fill="#00ff00" />
<rect x="1110.00" y="352.00" width="3.00" height="67.00" fill="#fff" />
<rect x="1119.00" y="417.00" width="1.00" height="81.00" fill="#00ff00" />
<rect x="1117.00" y="420.00" width="5.00" height="68.00" fill="#00ff00" />
<rect x="1118.00" y="421.00" width="3.00" height="66.00" fill="#fff" />
<rect x="1127.00" y="488.00" width="1.00" height="42.00" fill="#00ff00" />
<rect x="1125.00" y="491.00" width="5.00" height="7.00" fill="#00ff00" />
<rect x="1126.00" y="492.00" width="3.00" height="5.00" fill="#fff" />
<rect x="1135.00" y="485.00" width="1.00" height="252.00" fill="#00ff00" />
<rect x="1133.00" y="491.00" width="5.00" height="206.00" fill="#00ff00" />
<rect x="1134.00" y="492.00" width="3.00" height="204.00" fill="#fff" />
<rect x="1143.00" y="627.00" width="1.00" height="77.00" fill="#00ff00" />
<rect x="1141.00" y="665.00" width="5.00" height="32.00" fill="#00ff00" />
<rect x="1142.00" y="666.00" width="3.00" height="30.00" fill="#000" />
<rect x="1151.00" y="641.00" width="1.00" height="57.00" fill="#00ff00" />
<rect x="1149.00" y="665.00" width="5.00" height="6.00" fill="#00ff00" />
<rect x="1150.00" y="666.00" width="3.00" height="4.00" fill="#000" />
<rect x="1159.00" y="662.00" width="1.00" height="60.00" fill="#00ff00" />
<rect x="1157.00" y="662.00" width="5.00" height="47.00" fill="#00ff00" />
<rect x="1158.00" y="663.00" width="3.00" height="45.00" fill="#fff" />
<rect x="1167.00" y="665.00" width="1.00" height="50.00" fill="#00ff00" />
<rect x="1165.00" y="665.00" width="5.00" height="50.00" fill="#00ff00" />
<rect x="1166.00" y="666.00" width="3.00" height="48.00" fill="#000" />
<rect x="1175.00" y="635.00" width="1.00" height="75.00" fill="#00ff00" />
<rect x="1173.00" y="668.00" width="5.00" height="32.00" fill="#00ff00" />
<rect x="1174.00" y="669.00" width="3.00" height="30.00" fill="#fff" />
<rect x="1183.00" y="709.00" width="1.00" height="66.00" fill="#00ff00" />
<rect x="1181.00" y="718.00" width="5.00" height="27.00" fill="#00ff00" />
<rect x="1182.00" y="719.00" width="3.00" height="25.00" fill="#fff" />
<rect x="1191.00" y="656.00" width="1.00" height="87.00" fill="#00ff00" />
<rect x="1189.00" y="671.00" width="5.00" height="72.00" fill="#00ff00" />
<rect x="1190.00" y="672.00" width="3.00" height="70.00" fill="#000" />
<rect x="1199.00" y="668.00" width="1.00" height="48.00" fill="#00ff00" />
<rect x="1197.00" y="674.00" width="5.00" height="32.00" fill="#00ff00" />
<rect x="1198.00" y="675.00" width="3.00" height="30.00" fill="#fff" />
<rect x="1207.00" y="683.00" width="1.00" height="33.00" fill="#00ff00" />
<rect x="1205.00" y="689.00" width="5.00" height="20.00" fill="#00ff00" />
<rect x="1206.00" y="690.00" width="3.00" height="18.00" fill="#000" />
<rect x="1215.00" y="606.00" width="1.00" height="75.00" fill="#00ff00" />
<rect x="1213.00" y="621.00" width="5.00" height="60.00" fill="#00ff00" />
<rect x="1214.00" y="622.00" width="3.00" height="58.00" fill="#000" />
<rect x="1223.00" y="574.00" width="1.00" height="57.00" fill="#00ff00" />
<rect x="1221.00" y="585.00" width="5.00" height="33.00" fill="#00ff00" />
<rect x="1222.00" y="586.00" width="3.00" height="31.00" fill="#000" />
<rect x="1231.00" y="541.00" width="1.00" height="47.00" fill="#00ff00" />
<rect x="1229.00" y="553.00" width="5.00" height="35.00" fill="#00ff00" />
<rect x="1230.00" y="554.00" width="3.00" height="33.00" fill="#000" />
<rect x="1239.00" y="541.00" width="1.00" height="28.00" fill="#00ff00" />
<rect x="1237.00" y="556.00" width="5.00" height="6.00" fill="#00ff00" />
<rect x="1238.00" y="557.00" width="3.00" height="4.00" fill="#fff" />
<rect x="1247.00" y="491.00" width="1.00" height="71.00" fill="#00ff00" />
<rect x="1245.00" y="491.00" width="5.00" height="71.00" fill="#00ff00" />
<rect x="1246.00" y="492.00" width="3.00" height="69.00" fill="#000" />
<rect x="1255.00" y="470.00" width="1.00" height="36.00" fill="#00ff00" />
<rect x="1253.00" y="491.00" width="5.00" height="6.00" fill="#00ff00" />
<rect x="1254.00" y="492.00" width="3.00" height="4.00" fill="#fff" />
<rect x="1263.00" y="459.00" width="1.00" height="51.00" fill="#00ff00" />
<rect x="1261.00" y="482.00" width="5.00" height="9.00" fill="#00ff00" />
<rect x="1262.00" y="483.00" width="3.00" height="7.00" fill="#000" />
<rect x="1271.00" y="408.00" width="1.00" height="87.00" fill="#00ff00" />
<rect x="1269.00" y="432.00" width="5.00" height="50.00" fill="#00ff00" />
<rect x="1270.00" y="433.00" width="3.00" height="48.00" fill="#000" />
<rect x="1279.00" y="400.00" width="1.00" height="39.00" fill="#00ff00" />
<rect x="1277.00" y="418.00" width="5.00" height="11.00" fill="#00ff00" />
<rect x="1278.00" y="419.00" width="3.00" height="9.00" fill="#000" />
<rect x="1287.00" y="408.00" width="1.00" height="37.00" fill="#00ff00" />
<rect x="1295.00" y="397.00" width="1.00" height="62.00" fill="#00ff00" />
<rect x="1293.00" y="426.00" width="5.00" height="33.00" fill="#00ff00" />
<rect x="1294.00" y="427.00" width="3.00" height="31.00" fill="#fff" />
<rect x="1303.00" y="456.00" width="1.00" height="48.00" fill="#00ff00" />
<rect x="1301.00" y="459.00" width="5.00" height="1.00" fill="#00ff00" />
<rect x="1311.00" y="459.00" width="1.00" height="33.00" fill="#00ff00" />
<rect x="1309.00" y="462.00" width="5.00" height="18.00" fill="#00ff00" />
<rect x="1310.00" y="463.00" width="3.00" height="16.00" fill="#fff" />
<rect x="1319.00" y="414.00" width="1.00" height="66.00" fill="#00ff00" />
<rect x="1317.00" y="444.00" width="5.00" height="29.00" fill="#00ff00" />
<rect x="1318.00" y="445.00" width="3.00" height="27.00" fill="#000" />
<rect x="1327.00" y="441.00" width="1.00" height="33.00" fill="#00ff00" />
<rect x="1325.00" y="450.00" width="5.00" height="12.00" fill="#00ff00" />
<rect x="1326.00" y="451.00" width="3.00" height="10.00" fill="#fff" />
<rect x="1335.00" y="459.00" width="1.00" height="11.00" fill="#00ff00" />
<rect x="1333.00" y="459.00" width="5.00" height="11.00" fill="#00ff00" />
<rect x="1334.00" y="460.00" width="3.00" height="9.00" fill="#fff" />
<polyline points="925.0,124.6 967.5,125.2 990.0,125.8 1023.8,126.9 1072.6,130.6 1128.9,134.3 1170.2,136.3 1207.7,140.4 1230.3,146.4 1260.3,156.9 1297.8,168.9 1335.4,180.2" fill="none" stroke="#1e90ff" stroke-width="2" shape-rendering="crispEdges" />
<polyline points="783.4,227.1 808.6,232.1 842.3,241.2 876.0,250.1 909.6,255.8 943.2,258.5 993.7,258.5 1027.4,261.8 1061.0,265.2 1094.7,269.2 1111.5,273.3 1128.3,281.0 1139.0,291.2 1154.6,304.3 1174.2,321.2 1193.7,335.4 1211.5,348.8 1229.3,358.6 1240.0,364.0 1251.7,369.5 1275.4,378.2 1299.2,383.8 1318.2,389.3 1330.9,393.6 1335.6,393.7" fill="none" stroke="#ff00ff" stroke-width="2.3" shape-rendering="crispEdges" stroke-linejoin="round"/>
<polyline points="783.4,265.2 808.6,286.1 842.3,309.7 869.2,323.2 892.8,331.6 913.0,333.3" fill="none" stroke="#ee82ee" stroke-width="2.3" shape-rendering="crispEdges" stroke-linejoin="round" stroke-linecap="round"/>
<polyline points="913.0,333.3 929.8,327.2 950.0,316.5 970.2,301.2 990.3,288.4 1007.0,283.0 1015.5,283.5" fill="none" stroke="#00bfff" stroke-width="2.3" shape-rendering="crispEdges" stroke-linejoin="round" stroke-linecap="round"/>
<polyline points="1015.5,283.5 1025.0,284.8 1042.0,286.1" fill="none" stroke="#ee82ee" stroke-width="2.3" shape-rendering="crispEdges" stroke-linejoin="round" stroke-linecap="round"/>
<polyline points="1042.0,286.1 1056.2,285.4" fill="none" stroke="#00bfff" stroke-width="2.3" shape-rendering="crispEdges" stroke-linejoin="round" stroke-linecap="round"/>
<polyline points="1056.2,285.4 1077.8,287.8 1103.0,291.1 1112.6,295.3 1120.0,308.0 1127.7,323.0 1131.3,343.5 1136.6,368.4 1143.8,397.0 1152.7,423.7 1161.6,445.0 1169.4,465.7 1177.2,485.5 1183.2,507.3 1199.0,531.0 1212.9,550.9 1223.8,562.4 1232.7,564.8 1239.6,565.1" fill="none" stroke="#ee82ee" stroke-width="2.3" shape-rendering="crispEdges" stroke-linejoin="round" stroke-linecap="round"/>
<polyline points="1239.6,565.1 1248.5,564.4 1258.4,559.8 1272.3,549.9 1286.1,538.0 1300.0,526.7 1311.0,519.2 1327.7,510.5 1335.6,510.5" fill="none" stroke="#00bfff" stroke-width="2.3" shape-rendering="crispEdges" stroke-linejoin="round" stroke-linecap="round"/>
<path d="M879.60,263.96 l-5.9,-5.7 v-4.15 l4.15,2.95 v-7.1 h3.5 v7.1 l4.15,-2.95 v4.15z" fill="#ba55d3"/>
<path d="M918.60,459.90 l-5.65,5.65 v4.3 l4,-2.8 v7.7 h3.3 v-7.7 l4,2.8 v-4.3z" fill="#4169e1"/>
<path d="M798.60,550.10 l-5.65,5.65 v4.3 l4,-2.8 v7.7 h3.3 v-7.7 l4,2.8 v-4.3z" fill="#4169e1"/>
<path d="M1238.60,785.80 l-5.65,5.65 v4.3 l4,-2.8 v7.7 h3.3 v-7.7 l4,2.8 v-4.3z" fill="#4169e1"/>
<path d="M1335.60,377.90 l-5.9,-5.7 v-4.15 l4.15,2.95 v-7.1 h3.5 v7.1 l4.15,-2.95 v4.15z" fill="#ba55d3"/>
</g>
<rect x="7.00" y="124.00" width="708.00" height="1.00" fill="#fff" /><rect x="7.00" y="802.00" width="708.00" height="1.00" fill="#fff" /><rect x="7.00" y="124.00" width="1.00" height="679.00" fill="#fff" /><rect x="714.00" y="124.00" width="1.00" height="679.00" fill="#fff" />
<rect x="7.00" y="804.00" width="708.00" height="1.00" fill="#fff" /><rect x="7.00" y="881.00" width="708.00" height="1.00" fill="#fff" /><rect x="7.00" y="804.00" width="1.00" height="78.00" fill="#fff" /><rect x="714.00" y="804.00" width="1.00" height="78.00" fill="#fff" />
<rect x="7.00" y="883.00" width="708.00" height="1.00" fill="#fff" /><rect x="7.00" y="954.00" width="708.00" height="1.00" fill="#fff" /><rect x="7.00" y="883.00" width="1.00" height="72.00" fill="#fff" /><rect x="714.00" y="883.00" width="1.00" height="72.00" fill="#fff" />
<rect x="715.00" y="806.00" width="2.00" height="1.00" fill="#fff" />
<rect x="715.00" y="879.00" width="2.00" height="1.00" fill="#fff" />
<rect x="715.00" y="885.00" width="2.00" height="1.00" fill="#fff" />
<rect x="715.00" y="952.00" width="2.00" height="1.00" fill="#fff" />
<rect x="782.00" y="124.00" width="708.00" height="1.00" fill="#fff" /><rect x="782.00" y="804.00" width="708.00" height="1.00" fill="#fff" /><rect x="782.00" y="124.00" width="1.00" height="681.00" fill="#fff" /><rect x="1489.00" y="124.00" width="1.00" height="681.00" fill="#fff" />
<rect x="782.00" y="806.00" width="708.00" height="1.00" fill="#fff" /><rect x="782.00" y="884.00" width="708.00" height="1.00" fill="#fff" /><rect x="782.00" y="806.00" width="1.00" height="79.00" fill="#fff" /><rect x="1489.00" y="806.00" width="1.00" height="79.00" fill="#fff" />
<rect x="782.00" y="886.00" width="708.00" height="1.00" fill="#fff" /><rect x="782.00" y="954.00" width="708.00" height="1.00" fill="#fff" /><rect x="782.00" y="886.00" width="1.00" height="69.00" fill="#fff" /><rect x="1489.00" y="886.00" width="1.00" height="69.00" fill="#fff" />
<rect x="1490.00" y="883.00" width="2.00" height="1.00" fill="#fff" />
<rect x="1490.00" y="888.00" width="2.00" height="1.00" fill="#fff" />
<rect x="1490.00" y="952.00" width="2.00" height="1.00" fill="#fff" />
<rect x="715.00" y="169.00" width="3.00" height="1.00" fill="#fff" />
<text x="720.50" y="173.00" font-size="10.00" fill="#fff" textLength="32.80" lengthAdjust="spacingAndGlyphs" >1.11545</text>
<rect x="1490.00" y="170.00" width="3.00" height="1.00" fill="#fff" />
<text x="1495.50" y="174.00" font-size="10.00" fill="#fff" textLength="32.60" lengthAdjust="spacingAndGlyphs" >1.11545</text>
<rect x="715.00" y="213.00" width="3.00" height="1.00" fill="#fff" />
<text x="720.50" y="217.00" font-size="10.00" fill="#fff" textLength="32.80" lengthAdjust="spacingAndGlyphs" >1.11530</text>
<rect x="1490.00" y="214.00" width="3.00" height="1.00" fill="#fff" />
<text x="1495.50" y="218.00" font-size="10.00" fill="#fff" textLength="32.60" lengthAdjust="spacingAndGlyphs" >1.11530</text>
<rect x="715.00" y="257.00" width="3.00" height="1.00" fill="#fff" />
<text x="720.50" y="261.00" font-size="10.00" fill="#fff" textLength="32.80" lengthAdjust="spacingAndGlyphs" >1.11515</text>
<rect x="1490.00" y="258.00" width="3.00" height="1.00" fill="#fff" />
<text x="1495.50" y="262.00" font-size="10.00" fill="#fff" textLength="32.60" lengthAdjust="spacingAndGlyphs" >1.11515</text>
<rect x="715.00" y="301.00" width="3.00" height="1.00" fill="#fff" />
<text x="720.50" y="305.00" font-size="10.00" fill="#fff" textLength="32.80" lengthAdjust="spacingAndGlyphs" >1.11500</text>
<rect x="1490.00" y="303.00" width="3.00" height="1.00" fill="#fff" />
<text x="1495.50" y="307.00" font-size="10.00" fill="#fff" textLength="32.60" lengthAdjust="spacingAndGlyphs" >1.11500</text>
<rect x="715.00" y="345.00" width="3.00" height="1.00" fill="#fff" />
<text x="720.50" y="349.00" font-size="10.00" fill="#fff" textLength="32.80" lengthAdjust="spacingAndGlyphs" >1.11485</text>
<rect x="1490.00" y="347.00" width="3.00" height="1.00" fill="#fff" />
<text x="1495.50" y="351.00" font-size="10.00" fill="#fff" textLength="32.60" lengthAdjust="spacingAndGlyphs" >1.11485</text>
<rect x="715.00" y="390.00" width="3.00" height="1.00" fill="#fff" />
<text x="720.50" y="394.00" font-size="10.00" fill="#fff" textLength="32.80" lengthAdjust="spacingAndGlyphs" >1.11470</text>
<rect x="1490.00" y="391.00" width="3.00" height="1.00" fill="#fff" />
<text x="1495.50" y="395.00" font-size="10.00" fill="#fff" textLength="32.60" lengthAdjust="spacingAndGlyphs" >1.11470</text>
<rect x="715.00" y="434.00" width="3.00" height="1.00" fill="#fff" />
<text x="720.50" y="438.00" font-size="10.00" fill="#fff" textLength="32.80" lengthAdjust="spacingAndGlyphs" >1.11455</text>
<rect x="1490.00" y="435.00" width="3.00" height="1.00" fill="#fff" />
<text x="1495.50" y="439.00" font-size="10.00" fill="#fff" textLength="32.60" lengthAdjust="spacingAndGlyphs" >1.11455</text>
<rect x="715.00" y="478.00" width="3.00" height="1.00" fill="#fff" />
<text x="720.50" y="482.00" font-size="10.00" fill="#fff" textLength="32.80" lengthAdjust="spacingAndGlyphs" >1.11440</text>
<rect x="1490.00" y="479.00" width="3.00" height="1.00" fill="#fff" />
<text x="1495.50" y="483.00" font-size="10.00" fill="#fff" textLength="32.60" lengthAdjust="spacingAndGlyphs" >1.11440</text>
<rect x="715.00" y="522.00" width="3.00" height="1.00" fill="#fff" />
<text x="720.50" y="526.00" font-size="10.00" fill="#fff" textLength="32.80" lengthAdjust="spacingAndGlyphs" >1.11425</text>
<rect x="1490.00" y="524.00" width="3.00" height="1.00" fill="#fff" />
<text x="1495.50" y="528.00" font-size="10.00" fill="#fff" textLength="32.60" lengthAdjust="spacingAndGlyphs" >1.11425</text>
<rect x="715.00" y="566.00" width="3.00" height="1.00" fill="#fff" />
<text x="720.50" y="570.00" font-size="10.00" fill="#fff" textLength="32.80" lengthAdjust="spacingAndGlyphs" >1.11410</text>
<rect x="1490.00" y="568.00" width="3.00" height="1.00" fill="#fff" />
<text x="1495.50" y="572.00" font-size="10.00" fill="#fff" textLength="32.60" lengthAdjust="spacingAndGlyphs" >1.11410</text>
<rect x="715.00" y="610.00" width="3.00" height="1.00" fill="#fff" />
<text x="720.50" y="614.00" font-size="10.00" fill="#fff" textLength="32.80" lengthAdjust="spacingAndGlyphs" >1.11395</text>
<rect x="1490.00" y="612.00" width="3.00" height="1.00" fill="#fff" />
<text x="1495.50" y="616.00" font-size="10.00" fill="#fff" textLength="32.60" lengthAdjust="spacingAndGlyphs" >1.11395</text>
<rect x="715.00" y="654.00" width="3.00" height="1.00" fill="#fff" />
<text x="720.50" y="658.00" font-size="10.00" fill="#fff" textLength="32.80" lengthAdjust="spacingAndGlyphs" >1.11380</text>
<rect x="1490.00" y="656.00" width="3.00" height="1.00" fill="#fff" />
<text x="1495.50" y="660.00" font-size="10.00" fill="#fff" textLength="32.60" lengthAdjust="spacingAndGlyphs" >1.11380</text>
<rect x="715.00" y="699.00" width="3.00" height="1.00" fill="#fff" />
<text x="720.50" y="703.00" font-size="10.00" fill="#fff" textLength="32.80" lengthAdjust="spacingAndGlyphs" >1.11365</text>
<rect x="1490.00" y="701.00" width="3.00" height="1.00" fill="#fff" />
<text x="1495.50" y="705.00" font-size="10.00" fill="#fff" textLength="32.60" lengthAdjust="spacingAndGlyphs" >1.11365</text>
<rect x="715.00" y="743.00" width="3.00" height="1.00" fill="#fff" />
<text x="720.50" y="747.00" font-size="10.00" fill="#fff" textLength="32.80" lengthAdjust="spacingAndGlyphs" >1.11350</text>
<rect x="1490.00" y="745.00" width="3.00" height="1.00" fill="#fff" />
<text x="1495.50" y="749.00" font-size="10.00" fill="#fff" textLength="32.60" lengthAdjust="spacingAndGlyphs" >1.11350</text>
<rect x="715.00" y="787.00" width="3.00" height="1.00" fill="#fff" />
<text x="720.50" y="791.00" font-size="10.00" fill="#fff" textLength="32.80" lengthAdjust="spacingAndGlyphs" >1.11335</text>
<rect x="1490.00" y="789.00" width="3.00" height="1.00" fill="#fff" />
<text x="1495.50" y="793.00" font-size="10.00" fill="#fff" textLength="32.60" lengthAdjust="spacingAndGlyphs" >1.11335</text>
<rect x="716.00" y="464.00" width="41.00" height="11.00" fill="#fff" />
<text x="720.50" y="473.00" font-size="10.00" fill="#000" textLength="32.80" lengthAdjust="spacingAndGlyphs" >1.11443</text>
<rect x="1491.00" y="465.00" width="41.00" height="11.00" fill="#fff" />
<text x="1495.50" y="474.00" font-size="10.00" fill="#000" textLength="32.60" lengthAdjust="spacingAndGlyphs" >1.11443</text>
<path d="M11.3,131 h7 l-3.5,4.2z" fill="#fff"/>
<text x="23.00" y="136.00" font-size="10.00" fill="#fff" textLength="202.00" lengthAdjust="spacingAndGlyphs" >EURUSD,M1  1.11447 1.11447 1.11443 1.11443</text>
<text x="798.00" y="136.00" font-size="10.00" fill="#fff" textLength="202.00" lengthAdjust="spacingAndGlyphs" >EURUSD,M1  1.11447 1.11447 1.11443 1.11443</text>
<path d="M1341.5,125 h9.6 l-4.8,5z" fill="#778899"/>
<text x="570.50" y="482.90" font-size="15.80" fill="#ececec" textLength="40.30" lengthAdjust="spacingAndGlyphs" >&lt; 0:47</text>
<text x="1345.50" y="483.90" font-size="15.80" fill="#ececec" textLength="40.30" lengthAdjust="spacingAndGlyphs" >&lt; 0:47</text>
<text x="615.80" y="786.70" font-size="21.10" fill="#b2e0f4" textLength="87.60" lengthAdjust="spacingAndGlyphs" >|M5=3:47</text>
<rect x="8.00" y="955.00" width="1.00" height="3.00" fill="#fff" />
<text x="7.50" y="967.00" font-size="10.00" fill="#fff" textLength="51.64" lengthAdjust="spacingAndGlyphs" >25 Apr 2019</text>
<rect x="783.00" y="955.00" width="1.00" height="3.00" fill="#fff" />
<text x="782.50" y="967.00" font-size="10.00" fill="#fff" textLength="51.64" lengthAdjust="spacingAndGlyphs" >25 Apr 2019</text>
<rect x="72.00" y="955.00" width="1.00" height="3.00" fill="#fff" />
<text x="71.50" y="967.00" font-size="10.00" fill="#fff" textLength="54.30" lengthAdjust="spacingAndGlyphs" >25 Apr 10:45</text>
<rect x="847.00" y="955.00" width="1.00" height="3.00" fill="#fff" />
<text x="846.50" y="967.00" font-size="10.00" fill="#fff" textLength="54.30" lengthAdjust="spacingAndGlyphs" >25 Apr 10:45</text>
<rect x="136.00" y="955.00" width="1.00" height="3.00" fill="#fff" />
<text x="135.50" y="967.00" font-size="10.00" fill="#fff" textLength="54.30" lengthAdjust="spacingAndGlyphs" >25 Apr 10:53</text>
<rect x="911.00" y="955.00" width="1.00" height="3.00" fill="#fff" />
<text x="910.50" y="967.00" font-size="10.00" fill="#fff" textLength="54.30" lengthAdjust="spacingAndGlyphs" >25 Apr 10:53</text>
<rect x="200.00" y="955.00" width="1.00" height="3.00" fill="#fff" />
<text x="199.50" y="967.00" font-size="10.00" fill="#fff" textLength="53.59" lengthAdjust="spacingAndGlyphs" >25 Apr 11:01</text>
<rect x="975.00" y="955.00" width="1.00" height="3.00" fill="#fff" />
<text x="974.50" y="967.00" font-size="10.00" fill="#fff" textLength="53.59" lengthAdjust="spacingAndGlyphs" >25 Apr 11:01</text>
<rect x="264.00" y="955.00" width="1.00" height="3.00" fill="#fff" />
<text x="263.50" y="967.00" font-size="10.00" fill="#fff" textLength="53.59" lengthAdjust="spacingAndGlyphs" >25 Apr 11:09</text>
<rect x="1039.00" y="955.00" width="1.00" height="3.00" fill="#fff" />
<text x="1038.50" y="967.00" font-size="10.00" fill="#fff" textLength="53.59" lengthAdjust="spacingAndGlyphs" >25 Apr 11:09</text>
<rect x="328.00" y="955.00" width="1.00" height="3.00" fill="#fff" />
<text x="327.50" y="967.00" font-size="10.00" fill="#fff" textLength="53.59" lengthAdjust="spacingAndGlyphs" >25 Apr 11:17</text>
<rect x="1103.00" y="955.00" width="1.00" height="3.00" fill="#fff" />
<text x="1102.50" y="967.00" font-size="10.00" fill="#fff" textLength="53.59" lengthAdjust="spacingAndGlyphs" >25 Apr 11:17</text>
<rect x="392.00" y="955.00" width="1.00" height="3.00" fill="#fff" />
<text x="391.50" y="967.00" font-size="10.00" fill="#fff" textLength="53.59" lengthAdjust="spacingAndGlyphs" >25 Apr 11:25</text>
<rect x="1167.00" y="955.00" width="1.00" height="3.00" fill="#fff" />
<text x="1166.50" y="967.00" font-size="10.00" fill="#fff" textLength="53.59" lengthAdjust="spacingAndGlyphs" >25 Apr 11:25</text>
<rect x="456.00" y="955.00" width="1.00" height="3.00" fill="#fff" />
<text x="455.50" y="967.00" font-size="10.00" fill="#fff" textLength="53.59" lengthAdjust="spacingAndGlyphs" >25 Apr 11:33</text>
<rect x="1231.00" y="955.00" width="1.00" height="3.00" fill="#fff" />
<text x="1230.50" y="967.00" font-size="10.00" fill="#fff" textLength="53.59" lengthAdjust="spacingAndGlyphs" >25 Apr 11:33</text>
<rect x="520.00" y="955.00" width="1.00" height="3.00" fill="#fff" />
<text x="519.50" y="967.00" font-size="10.00" fill="#fff" textLength="53.59" lengthAdjust="spacingAndGlyphs" >25 Apr 11:41</text>
<rect x="1295.00" y="955.00" width="1.00" height="3.00" fill="#fff" />
<text x="1294.50" y="967.00" font-size="10.00" fill="#fff" textLength="53.59" lengthAdjust="spacingAndGlyphs" >25 Apr 11:41</text>
<rect x="8.00" y="814.00" width="706.00" height="1.00" fill="#9a9a9a" />
<rect x="8.00" y="872.00" width="706.00" height="1.00" fill="#9a9a9a" />
<polyline points="8.0,878.8 105.0,878.8" fill="none" stroke="#ff00ff" stroke-width="1.6" shape-rendering="crispEdges" stroke-linejoin="round"/>
<polyline points="105.0,878.8 112.9,874.2 118.8,854.4 126.7,820.7 131.0,812.0 136.6,806.9 208.0,806.9" fill="none" stroke="#1e90ff" stroke-width="1.6" shape-rendering="crispEdges" stroke-linejoin="round"/>
<polyline points="208.0,806.9 216.0,806.9 223.0,815.0 233.0,815.0 239.3,864.0 248.0,876.5 256.9,879.0" fill="none" stroke="#ff00ff" stroke-width="1.6" shape-rendering="crispEdges" stroke-linejoin="round"/>
<polyline points="256.9,879.0 264.4,826.3 272.4,815.0" fill="none" stroke="#1e90ff" stroke-width="1.6" shape-rendering="crispEdges" stroke-linejoin="round"/>
<polyline points="272.4,815.0 279.4,856.4 288.2,875.2 295.7,879.0 377.0,879.0" fill="none" stroke="#ff00ff" stroke-width="1.6" shape-rendering="crispEdges" stroke-linejoin="round"/>
<polyline points="377.0,879.0 393.8,877.7 400.0,877.7" fill="none" stroke="#1e90ff" stroke-width="1.6" shape-rendering="crispEdges" stroke-linejoin="round"/>
<polyline points="400.0,879.0 408.8,879.0" fill="none" stroke="#ff00ff" stroke-width="1.6" shape-rendering="crispEdges" stroke-linejoin="round"/>
<polyline points="408.8,879.0 416.3,865.2" fill="none" stroke="#1e90ff" stroke-width="1.6" shape-rendering="crispEdges" stroke-linejoin="round"/>
<polyline points="416.3,865.2 425.0,872.2 432.6,875.7" fill="none" stroke="#ff00ff" stroke-width="1.6" shape-rendering="crispEdges" stroke-linejoin="round"/>
<polyline points="432.6,875.7 440.0,815.0 442.6,812.6 449.0,808.0 457.7,807.0 527.9,807.0" fill="none" stroke="#1e90ff" stroke-width="1.6" shape-rendering="crispEdges" stroke-linejoin="round"/>
<polyline points="527.9,807.0 536.6,810.6 544.0,810.6 552.4,817.6 560.4,874.0" fill="none" stroke="#ff00ff" stroke-width="1.6" shape-rendering="crispEdges" stroke-linejoin="round"/>
<text x="12.30" y="817.00" font-size="10.00" fill="#fff" textLength="76.00" lengthAdjust="spacingAndGlyphs" >Rsx 6.4264 6.4264</text>
<rect x="716.00" y="809.00" width="12.00" height="11.00" fill="#a0a0a0" />
<text x="717.00" y="818.00" font-size="10.00" fill="#141414" textLength="10.62" lengthAdjust="spacingAndGlyphs" >90</text>
<text x="719.50" y="815.00" font-size="10.00" fill="#fff" textLength="14.00" lengthAdjust="spacingAndGlyphs" >102</text>
<rect x="716.00" y="867.00" width="12.00" height="11.00" fill="#a0a0a0" />
<text x="717.00" y="876.00" font-size="10.00" fill="#141414" textLength="10.62" lengthAdjust="spacingAndGlyphs" >10</text>
<g clip-path="url(#cs1)"><clipPath id="cs1"><rect x="715" y="800" width="50" height="81"/></clipPath><text x="718.40" y="883.00" font-size="10.00" fill="#fff" textLength="18.59" lengthAdjust="spacingAndGlyphs" >0.00</text></g>
<rect x="8.00" y="919.00" width="706.00" height="1.00" fill="#9a9a9a" />
<rect x="8.00" y="948.00" width="3.00" height="1.50" fill="#ff00ff" />
<rect x="14.00" y="945.00" width="5.00" height="5.00" fill="#1e90ff" />
<rect x="22.00" y="941.00" width="5.00" height="9.00" fill="#1e90ff" />
<rect x="30.00" y="938.00" width="5.00" height="12.00" fill="#1e90ff" />
<rect x="38.00" y="939.00" width="5.00" height="11.00" fill="#ff00ff" />
<rect x="46.00" y="936.00" width="5.00" height="14.00" fill="#1e90ff" />
<rect x="54.00" y="935.00" width="5.00" height="15.00" fill="#1e90ff" />
<rect x="62.00" y="932.00" width="5.00" height="18.00" fill="#1e90ff" />
<rect x="70.00" y="929.00" width="5.00" height="21.00" fill="#1e90ff" />
<rect x="78.00" y="924.00" width="5.00" height="26.00" fill="#1e90ff" />
<rect x="86.00" y="919.00" width="5.00" height="31.00" fill="#1e90ff" />
<rect x="94.00" y="914.00" width="5.00" height="36.00" fill="#1e90ff" />
<rect x="102.00" y="901.00" width="5.00" height="49.00" fill="#1e90ff" />
<rect x="110.00" y="894.00" width="5.00" height="56.00" fill="#1e90ff" />
<rect x="118.00" y="892.00" width="5.00" height="58.00" fill="#1e90ff" />
<rect x="126.00" y="890.00" width="5.00" height="60.00" fill="#1e90ff" />
<rect x="134.00" y="888.00" width="5.00" height="62.00" fill="#1e90ff" />
<rect x="142.00" y="888.00" width="5.00" height="62.00" fill="#1e90ff" />
<rect x="150.00" y="893.00" width="5.00" height="57.00" fill="#ff00ff" />
<rect x="158.00" y="897.00" width="5.00" height="53.00" fill="#ff00ff" />
<rect x="166.00" y="898.00" width="5.00" height="52.00" fill="#ff00ff" />
<rect x="174.00" y="895.00" width="5.00" height="55.00" fill="#1e90ff" />
<rect x="182.00" y="893.00" width="5.00" height="57.00" fill="#1e90ff" />
<rect x="190.00" y="895.00" width="5.00" height="55.00" fill="#ff00ff" />
<rect x="198.00" y="899.00" width="5.00" height="51.00" fill="#ff00ff" />
<rect x="206.00" y="900.00" width="5.00" height="50.00" fill="#ff00ff" />
<rect x="214.00" y="906.00" width="5.00" height="44.00" fill="#ff00ff" />
<rect x="222.00" y="917.00" width="5.00" height="33.00" fill="#ff00ff" />
<rect x="230.00" y="928.00" width="5.00" height="22.00" fill="#ff00ff" />
<rect x="238.00" y="939.00" width="5.00" height="11.00" fill="#ff00ff" />
<rect x="246.00" y="945.00" width="5.00" height="5.00" fill="#ff00ff" />
<rect x="254.00" y="948.00" width="5.00" height="2.00" fill="#ff00ff" />
<rect x="262.00" y="944.00" width="5.00" height="6.00" fill="#1e90ff" />
<rect x="270.00" y="942.00" width="5.00" height="8.00" fill="#1e90ff" />
<rect x="278.00" y="945.00" width="5.00" height="5.00" fill="#ff00ff" />
<rect x="286.00" y="948.00" width="5.00" height="2.00" fill="#ff00ff" />
<rect x="294.00" y="949.00" width="5.00" height="1.00" fill="#ff00ff" />
<rect x="302.00" y="949.00" width="5.00" height="1.00" fill="#ff00ff" />
<rect x="310.00" y="949.00" width="5.00" height="1.00" fill="#ff00ff" />
<rect x="318.00" y="949.00" width="5.00" height="1.00" fill="#ff00ff" />
<rect x="326.00" y="949.00" width="5.00" height="1.00" fill="#ff00ff" />
<rect x="334.00" y="949.00" width="5.00" height="1.00" fill="#ff00ff" />
<rect x="342.00" y="949.00" width="5.00" height="1.00" fill="#ff00ff" />
<rect x="350.00" y="949.00" width="5.00" height="1.00" fill="#ff00ff" />
<rect x="358.00" y="949.00" width="5.00" height="1.00" fill="#1e90ff" />
<rect x="366.00" y="948.00" width="5.00" height="2.00" fill="#1e90ff" />
<rect x="374.00" y="944.00" width="5.00" height="6.00" fill="#1e90ff" />
<rect x="382.00" y="942.00" width="5.00" height="8.00" fill="#1e90ff" />
<rect x="390.00" y="938.00" width="5.00" height="12.00" fill="#1e90ff" />
<rect x="398.00" y="932.00" width="5.00" height="18.00" fill="#1e90ff" />
<rect x="406.00" y="926.00" width="5.00" height="24.00" fill="#1e90ff" />
<rect x="414.00" y="913.00" width="5.00" height="37.00" fill="#1e90ff" />
<rect x="422.00" y="900.00" width="5.00" height="50.00" fill="#1e90ff" />
<rect x="430.00" y="894.00" width="5.00" height="56.00" fill="#1e90ff" />
<rect x="438.00" y="891.00" width="5.00" height="59.00" fill="#1e90ff" />
<rect x="446.00" y="889.00" width="5.00" height="61.00" fill="#1e90ff" />
<rect x="454.00" y="888.00" width="5.00" height="62.00" fill="#1e90ff" />
<rect x="462.00" y="888.00" width="5.00" height="62.00" fill="#1e90ff" />
<rect x="470.00" y="888.00" width="5.00" height="62.00" fill="#1e90ff" />
<rect x="478.00" y="888.00" width="5.00" height="62.00" fill="#1e90ff" />
<rect x="486.00" y="888.00" width="5.00" height="62.00" fill="#1e90ff" />
<rect x="494.00" y="888.00" width="5.00" height="62.00" fill="#1e90ff" />
<rect x="502.00" y="888.00" width="5.00" height="62.00" fill="#1e90ff" />
<rect x="510.00" y="888.00" width="5.00" height="62.00" fill="#ff00ff" />
<rect x="518.00" y="890.00" width="5.00" height="60.00" fill="#ff00ff" />
<rect x="526.00" y="892.00" width="5.00" height="58.00" fill="#ff00ff" />
<rect x="534.00" y="895.00" width="5.00" height="55.00" fill="#ff00ff" />
<rect x="542.00" y="895.00" width="5.00" height="55.00" fill="#ff00ff" />
<rect x="550.00" y="897.00" width="5.00" height="53.00" fill="#ff00ff" />
<rect x="558.00" y="900.00" width="5.00" height="50.00" fill="#ff00ff" />
<text x="12.30" y="896.00" font-size="10.00" fill="#fff" textLength="267.50" lengthAdjust="spacingAndGlyphs" >STC_COLOR 80.3453 0.0001 75.7100 79.0973 76.1505 80.3453</text>
<text x="718.40" y="894.00" font-size="10.00" fill="#fff" textLength="37.30" lengthAdjust="spacingAndGlyphs" >104.9771</text>
<rect x="716.00" y="914.00" width="12.00" height="11.00" fill="#a0a0a0" />
<text x="717.00" y="923.00" font-size="10.00" fill="#141414" textLength="10.62" lengthAdjust="spacingAndGlyphs" >50</text>
<text x="721.70" y="951.00" font-size="10.00" fill="#fff" textLength="27.00" lengthAdjust="spacingAndGlyphs" >4.9488</text>
<text x="718.40" y="954.00" font-size="10.00" fill="#fff" textLength="18.59" lengthAdjust="spacingAndGlyphs" >0.00</text>
<rect x="783.00" y="827.00" width="3.00" height="22.00" fill="#ff00ff" />
<rect x="789.00" y="827.00" width="5.00" height="17.00" fill="#ff00ff" />
<rect x="797.00" y="827.00" width="5.00" height="17.00" fill="#ff00ff" />
<rect x="805.00" y="827.00" width="5.00" height="20.00" fill="#ff00ff" />
<rect x="813.00" y="827.00" width="5.00" height="26.00" fill="#ff00ff" />
<rect x="821.00" y="827.00" width="5.00" height="20.00" fill="#ff00ff" />
<rect x="829.00" y="827.00" width="5.00" height="25.00" fill="#ff00ff" />
<rect x="837.00" y="827.00" width="5.00" height="19.00" fill="#ff00ff" />
<rect x="845.00" y="827.00" width="5.00" height="22.00" fill="#ff00ff" />
<rect x="853.00" y="827.00" width="5.00" height="19.00" fill="#ff00ff" />
<rect x="861.00" y="827.00" width="5.00" height="21.00" fill="#ff00ff" />
<rect x="869.00" y="827.00" width="5.00" height="24.00" fill="#ff00ff" />
<rect x="877.00" y="827.00" width="5.00" height="23.00" fill="#ff00ff" />
<rect x="885.00" y="827.00" width="5.00" height="20.00" fill="#ff00ff" />
<rect x="893.00" y="827.00" width="5.00" height="15.00" fill="#ff00ff" />
<rect x="901.00" y="827.00" width="5.00" height="14.00" fill="#ff00ff" />
<rect x="909.00" y="827.00" width="5.00" height="10.00" fill="#ff00ff" />
<rect x="917.00" y="827.00" width="5.00" height="1.00" fill="#ff00ff" />
<rect x="925.00" y="827.00" width="5.00" height="8.00" fill="#ff00ff" />
<rect x="933.00" y="827.00" width="5.00" height="5.00" fill="#ff00ff" />
<rect x="941.00" y="826.00" width="5.00" height="1.00" fill="#00bfff" />
<rect x="949.00" y="821.00" width="5.00" height="6.00" fill="#00bfff" />
<rect x="957.00" y="815.00" width="5.00" height="12.00" fill="#00bfff" />
<rect x="965.00" y="818.00" width="5.00" height="9.00" fill="#00bfff" />
<rect x="973.00" y="817.00" width="5.00" height="10.00" fill="#00bfff" />
<rect x="981.00" y="811.00" width="5.00" height="16.00" fill="#00bfff" />
<rect x="989.00" y="817.00" width="5.00" height="10.00" fill="#00bfff" />
<rect x="997.00" y="821.00" width="5.00" height="6.00" fill="#00bfff" />
<rect x="1005.00" y="819.00" width="5.00" height="8.00" fill="#00bfff" />
<rect x="1013.00" y="822.00" width="5.00" height="5.00" fill="#00bfff" />
<rect x="1021.00" y="822.00" width="5.00" height="5.00" fill="#00bfff" />
<rect x="1029.00" y="823.00" width="5.00" height="4.00" fill="#00bfff" />
<rect x="1037.00" y="817.00" width="5.00" height="10.00" fill="#00bfff" />
<rect x="1045.00" y="820.00" width="5.00" height="7.00" fill="#00bfff" />
<rect x="1053.00" y="823.00" width="5.00" height="4.00" fill="#00bfff" />
<rect x="1061.00" y="825.00" width="5.00" height="2.00" fill="#00bfff" />
<rect x="1069.00" y="826.00" width="5.00" height="1.00" fill="#00bfff" />
<rect x="1077.00" y="826.00" width="5.00" height="1.00" fill="#00bfff" />
<rect x="1085.00" y="827.00" width="5.00" height="1.00" fill="#ff00ff" />
<rect x="1093.00" y="827.00" width="5.00" height="3.00" fill="#ff00ff" />
<rect x="1101.00" y="827.00" width="5.00" height="4.00" fill="#ff00ff" />
<rect x="1109.00" y="827.00" width="5.00" height="14.00" fill="#ff00ff" />
<rect x="1117.00" y="827.00" width="5.00" height="22.00" fill="#ff00ff" />
<rect x="1125.00" y="827.00" width="5.00" height="24.00" fill="#ff00ff" />
<rect x="1133.00" y="827.00" width="5.00" height="47.00" fill="#ff00ff" />
<rect x="1141.00" y="827.00" width="5.00" height="43.00" fill="#ff00ff" />
<rect x="1149.00" y="827.00" width="5.00" height="44.00" fill="#ff00ff" />
<rect x="1157.00" y="827.00" width="5.00" height="49.00" fill="#ff00ff" />
<rect x="1165.00" y="827.00" width="5.00" height="44.00" fill="#ff00ff" />
<rect x="1173.00" y="827.00" width="5.00" height="49.00" fill="#ff00ff" />
<rect x="1181.00" y="827.00" width="5.00" height="54.00" fill="#ff00ff" />
<rect x="1189.00" y="827.00" width="5.00" height="46.00" fill="#ff00ff" />
<rect x="1197.00" y="827.00" width="5.00" height="50.00" fill="#ff00ff" />
<rect x="1205.00" y="827.00" width="5.00" height="48.00" fill="#ff00ff" />
<rect x="1213.00" y="827.00" width="5.00" height="39.00" fill="#ff00ff" />
<rect x="1221.00" y="827.00" width="5.00" height="34.00" fill="#ff00ff" />
<rect x="1229.00" y="827.00" width="5.00" height="30.00" fill="#ff00ff" />
<rect x="1237.00" y="827.00" width="5.00" height="29.00" fill="#ff00ff" />
<rect x="1245.00" y="827.00" width="5.00" height="18.00" fill="#ff00ff" />
<rect x="1253.00" y="827.00" width="5.00" height="17.00" fill="#ff00ff" />
<rect x="1261.00" y="827.00" width="5.00" height="13.00" fill="#ff00ff" />
<rect x="1269.00" y="827.00" width="5.00" height="5.00" fill="#ff00ff" />
<rect x="1277.00" y="826.00" width="5.00" height="1.00" fill="#00bfff" />
<rect x="1285.00" y="826.00" width="5.00" height="1.00" fill="#00bfff" />
<rect x="1293.00" y="827.00" width="5.00" height="1.00" fill="#ff00ff" />
<rect x="1301.00" y="826.00" width="5.00" height="1.00" fill="#00bfff" />
<rect x="1309.00" y="826.00" width="5.00" height="1.00" fill="#00bfff" />
<rect x="1317.00" y="821.00" width="5.00" height="6.00" fill="#00bfff" />
<rect x="1325.00" y="821.00" width="5.00" height="6.00" fill="#00bfff" />
<rect x="1333.00" y="821.00" width="5.00" height="6.00" fill="#00bfff" />
<text x="787.20" y="819.00" font-size="10.00" fill="#fff" textLength="98.60" lengthAdjust="spacingAndGlyphs" >dpo-histo 0.0002 0.0002</text>
<text x="1492.90" y="817.00" font-size="10.00" fill="#fff" textLength="29.21" lengthAdjust="spacingAndGlyphs" >0.0006</text>
<text x="1492.90" y="831.00" font-size="10.00" fill="#fff" textLength="18.59" lengthAdjust="spacingAndGlyphs" >0.00</text>
<text x="1492.90" y="881.00" font-size="10.00" fill="#fff" textLength="32.39" lengthAdjust="spacingAndGlyphs" >-0.0017</text>
<rect x="783.00" y="901.00" width="706.00" height="1.00" fill="#2f4f4f" />
<rect x="783.00" y="920.00" width="706.00" height="1.00" fill="#2f4f4f" />
<rect x="783.00" y="940.00" width="706.00" height="1.00" fill="#2f4f4f" />
<polyline points="782.9,953.0 798.7,900.0 807.6,888.7 879.9,888.7" fill="none" stroke="#00bfff" stroke-width="1.7" shape-rendering="crispEdges" stroke-linejoin="round"/>
<polyline points="879.9,888.7 895.7,888.7" fill="none" stroke="#ff00ff" stroke-width="1.7" shape-rendering="crispEdges" stroke-linejoin="round"/>
<polyline points="895.7,888.7 983.2,888.7" fill="none" stroke="#00bfff" stroke-width="1.7" shape-rendering="crispEdges" stroke-linejoin="round"/>
<polyline points="983.2,888.7 990.8,927.0 999.7,949.4 1004.8,951.7 1088.5,951.7" fill="none" stroke="#ff00ff" stroke-width="1.7" shape-rendering="crispEdges" stroke-linejoin="round"/>
<polyline points="1088.5,951.7 1096.0,951.7" fill="none" stroke="#00bfff" stroke-width="1.7" shape-rendering="crispEdges" stroke-linejoin="round"/>
<polyline points="1096.0,951.7 1183.2,951.9" fill="none" stroke="#ff00ff" stroke-width="1.7" shape-rendering="crispEdges" stroke-linejoin="round"/>
<polyline points="1183.2,951.9 1190.3,919.7 1199.1,898.3 1208.4,889.0 1287.2,889.0" fill="none" stroke="#00bfff" stroke-width="1.7" shape-rendering="crispEdges" stroke-linejoin="round"/>
<polyline points="1287.2,889.0 1303.6,889.0 1311.1,919.7 1318.2,942.3 1326.2,951.4 1335.8,951.9" fill="none" stroke="#ff00ff" stroke-width="1.7" shape-rendering="crispEdges" stroke-linejoin="round"/>
<text x="787.20" y="899.00" font-size="10.00" fill="#fff" textLength="171.80" lengthAdjust="spacingAndGlyphs" >M1 rsx normalized velocity 0.0000 0.0000</text>
<text x="1492.90" y="896.00" font-size="10.00" fill="#fff" textLength="15.93" lengthAdjust="spacingAndGlyphs" >102</text>
<text x="1492.90" y="904.00" font-size="10.00" fill="#fff" textLength="10.62" lengthAdjust="spacingAndGlyphs" >80</text>
<text x="1492.90" y="924.00" font-size="10.00" fill="#fff" textLength="10.62" lengthAdjust="spacingAndGlyphs" >50</text>
<text x="1492.90" y="944.00" font-size="10.00" fill="#fff" textLength="10.62" lengthAdjust="spacingAndGlyphs" >20</text>
<clipPath id="cs2"><rect x="1491" y="930" width="46" height="24"/></clipPath><g clip-path="url(#cs2)"><text x="1496.00" y="950.00" font-size="10.00" fill="#fff" textLength="5.31" lengthAdjust="spacingAndGlyphs" >2</text><text x="1493.50" y="957.00" font-size="10.00" fill="#fff" textLength="18.59" lengthAdjust="spacingAndGlyphs" >0.00</text></g>
</svg>
<svg width="1537" height="92" viewBox="0 0 1537 92">
<rect x="1427" y="0" width="10" height="1" fill="#777"/>
<path d="M1472.5,0 v4.5 h7.5 v-4.5 M1480,2.5 h2 v-2.5" fill="none" stroke="#777" stroke-width="1"/>
<path d="M1518.5,5 l5,-5 l5,5" fill="none" stroke="#777" stroke-width="1"/>
<g fill="none"><path d="M18.9,47.7 v7.9 a7.9,7.9 0 0 0 7.9,-7.9 a7.9,7.9 0 0 0 -3,-6.2z" fill="#4fae4f" fill-opacity="0.45"/><path d="M18.9,39.8 a7.9,7.9 0 0 0 0,15.8" stroke="#5b85d6" stroke-width="1.2" stroke-dasharray="2.2 1.2" stroke-opacity="0.8"/><path d="M18.9,42.9 a4.8,4.8 0 0 0 0,9.6" stroke="#5b85d6" stroke-width="1.2" stroke-dasharray="2 1" stroke-opacity="0.8"/><path d="M18.9,39.8 a7.9,7.9 0 0 1 7.9,7.9 a7.9,7.9 0 0 1 -7.9,7.9" stroke="#7fbf86" stroke-width="1.2" stroke-opacity="0.9"/><path d="M18.9,42.9 a4.8,4.8 0 0 1 4.8,4.8" stroke="#9cc7a6" stroke-width="1.2"/><path d="M19.4,47.5 v8" stroke="#1fa51f" stroke-width="1.6"/><circle cx="18.9" cy="47.4" r="2" fill="#2b5fd3"/></g>
<defs><linearGradient id="gy" x1="0" y1="0" x2="1" y2="1"><stop offset="0" stop-color="#fff27a"/><stop offset="1" stop-color="#e2a11a"/></linearGradient></defs>
<g><path d="M38.4,47.4 l15.2,-0.6 c-0.5,3 -4,7.5 -7.4,9.2 c-3,-1.8 -6.5,-5.2 -7.8,-8.6z" fill="url(#gy)" stroke="#d6a11e" stroke-width="0.6"/><ellipse cx="46" cy="44.9" rx="7.9" ry="2.5" fill="#4f9fd6" transform="rotate(-4 46 44.9)"/><path d="M41.8,44.3 c0.2,-5.6 7.4,-6 7.9,-0.6z" fill="#7cc0ea"/><ellipse cx="45.6" cy="46.2" rx="6.2" ry="1.3" fill="#2f80b8" fill-opacity="0.55"/><circle cx="50.5" cy="52" r="4.3" fill="#e3240f"/><rect x="48.9" y="50.4" width="3.2" height="3.2" fill="#fff"/></g>
<text x="59.20" y="51.00" font-size="12.60" fill="#0a0a14" textLength="66.40" lengthAdjust="spacingAndGlyphs" >AutoTrading</text>
<rect x="132.00" y="35.00" width="1.00" height="25.00" fill="#a6a6a6" />
<rect x="136.00" y="38.00" width="3.00" height="1.00" fill="#b4b4b4" />
<rect x="136.00" y="40.00" width="3.00" height="1.00" fill="#b4b4b4" />
<rect x="136.00" y="42.00" width="3.00" height="1.00" fill="#b4b4b4" />
<rect x="136.00" y="44.00" width="3.00" height="1.00" fill="#b4b4b4" />
<rect x="136.00" y="46.00" width="3.00" height="1.00" fill="#b4b4b4" />
<rect x="136.00" y="48.00" width="3.00" height="1.00" fill="#b4b4b4" />
<rect x="136.00" y="50.00" width="3.00" height="1.00" fill="#b4b4b4" />
<rect x="136.00" y="52.00" width="3.00" height="1.00" fill="#b4b4b4" />
<rect x="136.00" y="54.00" width="3.00" height="1.00" fill="#b4b4b4" />
<rect x="136.00" y="56.00" width="3.00" height="1.00" fill="#b4b4b4" />
<rect x="150.00" y="42.00" width="1.00" height="14.50" fill="#555" /><rect x="148.00" y="53.00" width="14.00" height="1.00" fill="#555" /><path d="M148.5,44.6 l2,-2.6 l2,2.6z M160.6,51.5 l2.6,2 l-2.6,2z" fill="#555"/>
<path d="M156.6,43 v8.6 M156.6,44.5 h2.3 M154.3,50.5 h2.3" stroke="#138a13" stroke-width="1.3" fill="none"/>
<rect x="170.00" y="36.00" width="25.00" height="22.00" fill="#f8f8f8" /><rect x="170.00" y="36.00" width="25.00" height="1.00" fill="#8e8e8e" /><rect x="170.00" y="36.00" width="1.00" height="22.00" fill="#8e8e8e" /><rect x="170.00" y="57.00" width="25.00" height="1.00" fill="#fdfdfd" /><rect x="194.00" y="36.00" width="1.00" height="22.00" fill="#fdfdfd" />
<rect x="178.00" y="42.00" width="1.00" height="14.50" fill="#555" /><rect x="176.00" y="53.00" width="14.00" height="1.00" fill="#555" /><path d="M176.5,44.6 l2,-2.6 l2,2.6z M188.6,51.5 l2.6,2 l-2.6,2z" fill="#555"/>
<path d="M184.5,40 v11.6" stroke="#0c7a0c" stroke-width="1.2"/><rect x="182.6" y="42.7" width="3.9" height="6.9" fill="#3fe03f" stroke="#0c8a0c" stroke-width="1"/>
<rect x="206.00" y="42.00" width="1.00" height="14.50" fill="#555" /><rect x="204.00" y="53.00" width="14.00" height="1.00" fill="#555" /><path d="M204.5,44.6 l2,-2.6 l2,2.6z M216.6,51.5 l2.6,2 l-2.6,2z" fill="#555"/>
<path d="M205.3,50.7 c2,-2.5 4,-5.6 6,-5.6 c2,0 3.4,3 5.6,4.1" stroke="#1c9a1c" stroke-width="1.3" fill="none"/>
<rect x="227.00" y="37.00" width="1.00" height="21.00" fill="#a6a6a6" />
<path d="M246.0,50.0 l5.2,5.2" stroke="#c9a227" stroke-width="2.6" stroke-linecap="round"/><circle cx="242.0" cy="46.0" r="5.3" fill="#dcebfb" stroke="#3b7fd0" stroke-width="1.5"/><path d="M239.2,46 h5.6" stroke="#2f6fc4" stroke-width="1.7"/><path d="M242.0,43.2 v5.6" stroke="#2f6fc4" stroke-width="1.7"/>
<path d="M274.0,50.0 l5.2,5.2" stroke="#c9a227" stroke-width="2.6" stroke-linecap="round"/><circle cx="270.0" cy="46.0" r="5.3" fill="#dcebfb" stroke="#3b7fd0" stroke-width="1.5"/><path d="M267.2,46 h5.6" stroke="#2f6fc4" stroke-width="1.7"/>
<rect x="292.00" y="40.00" width="8.00" height="7.60" fill="#4aa02c" />
<rect x="293.20" y="42.80" width="5.60" height="3.60" fill="#f4f8ff" />
<rect x="300.50" y="40.00" width="8.00" height="7.60" fill="#2a5bd0" />
<rect x="301.70" y="42.80" width="5.60" height="3.60" fill="#f4f8ff" />
<rect x="292.00" y="48.50" width="8.00" height="7.60" fill="#2a5bd0" />
<rect x="293.20" y="51.30" width="5.60" height="3.60" fill="#f4f8ff" />
<rect x="300.50" y="48.50" width="8.00" height="7.60" fill="#4aa02c" />
<rect x="301.70" y="51.30" width="5.60" height="3.60" fill="#f4f8ff" />
<rect x="317.00" y="37.00" width="1.00" height="21.00" fill="#a6a6a6" />
<rect x="322.00" y="36.00" width="25.00" height="22.00" fill="#f8f8f8" /><rect x="322.00" y="36.00" width="25.00" height="1.00" fill="#8e8e8e" /><rect x="322.00" y="36.00" width="1.00" height="22.00" fill="#8e8e8e" /><rect x="322.00" y="57.00" width="25.00" height="1.00" fill="#fdfdfd" /><rect x="346.00" y="36.00" width="1.00" height="22.00" fill="#fdfdfd" />
<rect x="330.00" y="42.00" width="1.00" height="14.50" fill="#555" /><rect x="328.00" y="53.00" width="14.00" height="1.00" fill="#555" /><path d="M328.5,44.6 l2,-2.6 l2,2.6z M340.6,51.5 l2.6,2 l-2.6,2z" fill="#555"/>
<path d="M334.8,43.2 l4,3 l-4,3z" fill="#2fd02f" stroke="#0d8e0d" stroke-width="0.8"/>
<rect x="350.00" y="36.00" width="25.00" height="22.00" fill="#f8f8f8" /><rect x="350.00" y="36.00" width="25.00" height="1.00" fill="#8e8e8e" /><rect x="350.00" y="36.00" width="1.00" height="22.00" fill="#8e8e8e" /><rect x="350.00" y="57.00" width="25.00" height="1.00" fill="#fdfdfd" /><rect x="374.00" y="36.00" width="1.00" height="22.00" fill="#fdfdfd" />
<rect x="358.00" y="42.00" width="1.00" height="14.50" fill="#555" /><rect x="356.00" y="53.00" width="14.00" height="1.00" fill="#555" /><path d="M356.5,44.6 l2,-2.6 l2,2.6z M368.6,51.5 l2.6,2 l-2.6,2z" fill="#555"/>
<circle cx="1502.6" cy="45.6" r="3.6" fill="#f4f8ff" stroke="#2a57c8" stroke-width="1.5"/><path d="M1500,48.6 l-4.4,4.2" stroke="#2a57c8" stroke-width="2.4" stroke-linecap="round"/>
<g><ellipse cx="1534" cy="45" rx="6" ry="4" fill="#e9e9ee" stroke="#b4b4bc" stroke-width="0.9"/><ellipse cx="1526.5" cy="48.6" rx="4.6" ry="3.2" fill="#f2f2f5" stroke="#a8a8b2" stroke-width="0.9"/><path d="M1523.4,50.6 l0.5,3.2 l2.6,-2.2z" fill="#d8d8de" stroke="#a8a8b2" stroke-width="0.6"/></g>
<text x="1.60" y="78.90" font-size="9.60" fill="#3a3a3a" textLength="17.70" lengthAdjust="spacingAndGlyphs" >M15</text>
<text x="29.30" y="78.90" font-size="9.60" fill="#3a3a3a" textLength="17.80" lengthAdjust="spacingAndGlyphs" >M30</text>
<text x="60.50" y="78.90" font-size="9.60" fill="#3a3a3a" textLength="11.50" lengthAdjust="spacingAndGlyphs" >H1</text>
<text x="87.40" y="78.90" font-size="9.60" fill="#3a3a3a" textLength="12.80" lengthAdjust="spacingAndGlyphs" >H4</text>
<text x="116.20" y="78.90" font-size="9.60" fill="#3a3a3a" textLength="12.00" lengthAdjust="spacingAndGlyphs" >D1</text>
<text x="143.80" y="78.90" font-size="9.60" fill="#3a3a3a" textLength="14.30" lengthAdjust="spacingAndGlyphs" >W1</text>
<text x="170.70" y="78.90" font-size="9.60" fill="#3a3a3a" textLength="14.70" lengthAdjust="spacingAndGlyphs" >MN</text>
<rect x="194.00" y="62.00" width="1.00" height="24.00" fill="#a6a6a6" />
</svg>
<svg width="1537" height="130" viewBox="0 0 1537 130">
<g fill="#f4f8ff" stroke="#2f6fd6" stroke-width="1.1"><rect x="6.8" y="101.8" width="10" height="8.5" rx="1"/><rect x="9.8" y="106" width="10" height="8.5" rx="1"/></g><path d="M11.5,111.5 l1.5,-2 l1.5,2.5 l1.5,-2.5 l1.5,2" fill="none" stroke="#2f6fd6" stroke-width="0.9"/><path d="M8.5,105 l1.5,-1.3 l1.5,1.3 l1.5,-1.3 l1.5,1.3" fill="none" stroke="#2f6fd6" stroke-width="0.8"/>
<rect x="1435.5" y="99.5" width="31" height="17" rx="2" fill="#c6d4e6" stroke="#8c9ebd" stroke-width="1"/>
<rect x="1469.5" y="99.5" width="31" height="17" rx="2" fill="#c6d4e6" stroke="#8c9ebd" stroke-width="1"/>
<rect x="1503.5" y="99.5" width="31" height="17" rx="2" fill="#c6d4e6" stroke="#8c9ebd" stroke-width="1"/>
<rect x="1446" y="108.5" width="10" height="3.6" rx="1" fill="#fff" stroke="#5a5f6a" stroke-width="0.9"/>
<rect x="1479.5" y="103.8" width="9.5" height="7.6" rx="1" fill="#fff" stroke="#5a5f6a" stroke-width="0.9"/><rect x="1482.3" y="106.4" width="4" height="2.6" fill="#c6d4e6" stroke="#5a5f6a" stroke-width="0.8"/>
<path d="M1514.6,104 l9.2,7.2 M1523.8,104 l-9.2,7.2" stroke="#4e535e" stroke-width="4.4"/><path d="M1514.6,104 l9.2,7.2 M1523.8,104 l-9.2,7.2" stroke="#fff" stroke-width="2.4"/>
</svg>
<div class="abs" style="left:364px;top:12px;width:605px;height:302px;box-sizing:border-box;border:1px solid rgba(0,0,0,0.42);background:#f0f0f0;background-clip:padding-box;box-shadow:0 3px 11px 1px rgba(0,0,0,0.36)"></div>
<div class="abs" style="left:365px;top:13px;width:603px;height:30px;background:#fff"></div>
<span class="t" style="left:373.30px;top:22px;font-size:11.529px;line-height:12px;height:12px;color:#9a9a9a;transform:scaleY(1.0929);transform-origin:0 10px;">Custom Indicator - rsx_normalized_velocity_nrp_mtf__divergence__alerts_1.01</span>
<span class="t" style="left:896.60px;top:21px;font-size:12.500px;line-height:14px;height:14px;color:#8a8a8a;">?</span>
<svg width="1537" height="60" viewBox="0 0 1537 60"><path d="M940,22 l10,10 M950,22 l-10,10" stroke="#8a8a8a" stroke-width="1.1" fill="none"/></svg>
<div class="abs" style="left:371px;top:70px;width:591px;height:208px;box-sizing:border-box;border:1px solid #d9d9d9;background:#fff"></div>
<div class="tab" style="left:373px;top:52px;width:43px;height:18px"></div>
<span class="t" style="left:379.00px;top:57px;font-size:10.332px;line-height:11px;height:11px;color:#000;transform:scaleY(1.0841);transform-origin:0 9px;">About</span>
<div class="tab" style="left:414px;top:52px;width:54px;height:18px"></div>
<span class="t" style="left:420.50px;top:57px;font-size:9.934px;line-height:11px;height:11px;color:#000;transform:scaleY(1.1274);transform-origin:0 9px;">Common</span>
<div class="tab" style="left:511px;top:52px;width:42px;height:18px"></div>
<span class="t" style="left:515.70px;top:57px;font-size:9.897px;line-height:11px;height:11px;color:#000;transform:scaleY(1.1317);transform-origin:0 9px;">Colors</span>
<div class="tab" style="left:551px;top:52px;width:46px;height:18px"></div>
<span class="t" style="left:558.00px;top:57px;font-size:10.482px;line-height:11px;height:11px;color:#000;transform:scaleY(1.0685);transform-origin:0 9px;">Levels</span>
<div class="tab" style="left:595px;top:52px;width:68px;height:18px"></div>
<span class="t" style="left:600.80px;top:57px;font-size:10.310px;line-height:11px;height:11px;color:#000;transform:scaleY(1.0863);transform-origin:0 9px;">Visualization</span>
<div class="tab" style="left:466px;top:50px;width:46px;height:21px;background:#fff"></div>
<span class="t" style="left:474.20px;top:55px;font-size:10.352px;line-height:11px;height:11px;color:#000;transform:scaleY(1.0819);transform-origin:0 9px;">Inputs</span>
<div class="abs" style="left:383px;top:80px;width:457px;height:188px;box-sizing:border-box;border:1px solid #828790;background:#fff"></div>
<div class="abs" style="left:384px;top:125px;width:437px;height:21px;background:#c9c9c9"></div>
<div class="abs" style="left:384px;top:126px;width:437px;height:19px;background:#ececec"></div>
<div class="abs" style="left:384px;top:165px;width:437px;height:21px;background:#c9c9c9"></div>
<div class="abs" style="left:384px;top:166px;width:437px;height:19px;background:#ececec"></div>
<div class="abs" style="left:384px;top:205px;width:437px;height:21px;background:#c9c9c9"></div>
<div class="abs" style="left:384px;top:206px;width:437px;height:19px;background:#ececec"></div>
<div class="abs" style="left:384px;top:245px;width:437px;height:21px;background:#c9c9c9"></div>
<div class="abs" style="left:384px;top:246px;width:437px;height:19px;background:#ececec"></div>
<div class="abs" style="left:602px;top:82px;width:1px;height:185px;background:#dedede"></div>
<div class="abs" style="left:820px;top:82px;width:1px;height:24px;background:#e0e0e0"></div>
<span class="t" style="left:391.50px;top:89px;font-size:10.098px;line-height:11px;height:11px;color:#000;transform:scaleY(1.1092);transform-origin:0 9px;">Variable</span>
<span class="t" style="left:608.90px;top:88px;font-size:10.550px;line-height:12px;height:12px;color:#000;transform:scaleY(1.0617);transform-origin:0 10px;">Value</span>
<span class="t" style="left:406.40px;top:111px;font-size:10.011px;line-height:11px;height:11px;color:#000;transform:scaleY(1.1188);transform-origin:0 9px;">TimeFrame</span>
<span class="t" style="left:605.60px;top:111px;font-size:10.249px;line-height:11px;height:11px;color:#000;transform:scaleY(1.0928);transform-origin:0 9px;">0</span>
<span class="t" style="left:406.40px;top:131px;font-size:10.299px;line-height:11px;height:11px;color:#000;transform:scaleY(1.0875);transform-origin:0 9px;">Length</span>
<span class="t" style="left:605.60px;top:131px;font-size:10.249px;line-height:11px;height:11px;color:#000;transform:scaleY(1.0928);transform-origin:0 9px;">24</span>
<span class="t" style="left:406.40px;top:151px;font-size:10.178px;line-height:11px;height:11px;color:#000;transform:scaleY(1.1005);transform-origin:0 9px;">NormPeriodRsi</span>
<span class="t" style="left:605.60px;top:151px;font-size:10.249px;line-height:11px;height:11px;color:#000;transform:scaleY(1.0928);transform-origin:0 9px;">2</span>
<span class="t" style="left:406.40px;top:171px;font-size:9.871px;line-height:11px;height:11px;color:#000;transform:scaleY(1.1346);transform-origin:0 9px;">_rsitypes</span>
<span class="t" style="left:605.60px;top:171px;font-size:10.264px;line-height:11px;height:11px;color:#000;transform:scaleY(1.0912);transform-origin:0 9px;">0=rsi,1=wilder rsi,2=rsx,3=cuttler rsi</span>
<span class="t" style="left:406.40px;top:191px;font-size:10.319px;line-height:11px;height:11px;color:#000;transform:scaleY(1.0854);transform-origin:0 9px;">NormRsiType</span>
<span class="t" style="left:605.60px;top:191px;font-size:10.249px;line-height:11px;height:11px;color:#000;transform:scaleY(1.0928);transform-origin:0 9px;">2</span>
<span class="t" style="left:406.40px;top:211px;font-size:9.919px;line-height:11px;height:11px;color:#000;transform:scaleY(1.1291);transform-origin:0 9px;">Price</span>
<span class="t" style="left:605.60px;top:211px;font-size:10.249px;line-height:11px;height:11px;color:#000;transform:scaleY(1.0928);transform-origin:0 9px;">0</span>
<span class="t" style="left:406.40px;top:231px;font-size:10.378px;line-height:11px;height:11px;color:#000;transform:scaleY(1.0792);transform-origin:0 9px;">DivergearrowSize</span>
<span class="t" style="left:605.60px;top:231px;font-size:10.249px;line-height:11px;height:11px;color:#000;transform:scaleY(1.0928);transform-origin:0 9px;">0</span>
<span class="t" style="left:406.40px;top:250px;font-size:10.601px;line-height:12px;height:12px;color:#000;transform:scaleY(1.0565);transform-origin:0 10px;">drawDivergences</span>
<span class="t" style="left:605.60px;top:251px;font-size:10.320px;line-height:11px;height:11px;color:#000;transform:scaleY(1.0852);transform-origin:0 9px;">false</span>
<div class="abs" style="left:822px;top:81px;width:17px;height:186px;background:#f0f0f0"></div>
<div class="abs" style="left:823px;top:99px;width:15px;height:39px;background:#cdcdcd"></div>
<svg width="1537" height="320" viewBox="0 0 1537 320">
<path d="M826.5,93.5 l3.8,-3.8 l3.8,3.8" fill="none" stroke="#505050" stroke-width="1.7"/>
<path d="M826.5,255 l3.8,3.8 l3.8,-3.8" fill="none" stroke="#505050" stroke-width="1.7"/>
<path d="M386.5,108.5 h10.5 l3.5,3.5 v10 l-2,1.5 l-2,-1.5 l-2,1.5 l-2,-1.5 l-2,1.5 l-2,-1.5 l-2,1.5 z" fill="#f3e08a" stroke="#b9a33a" stroke-width="1"/><path d="M397.0,108.5 v3.5 h3.5" fill="#fff" fill-opacity="0.6" stroke="#b9a33a" stroke-width="0.8"/><text x="388.00" y="119.00" font-size="9.00" fill="#5a4a00" textLength="9.50" lengthAdjust="spacingAndGlyphs" >ab</text>
<path d="M386.5,128.5 h10.5 l3.5,3.5 v10 l-2,1.5 l-2,-1.5 l-2,1.5 l-2,-1.5 l-2,1.5 l-2,-1.5 l-2,1.5 z" fill="#8fc3ee" stroke="#2f78c0" stroke-width="1"/><path d="M397.0,128.5 v3.5 h3.5" fill="#fff" fill-opacity="0.6" stroke="#2f78c0" stroke-width="0.8"/><text x="387.60" y="138.60" font-size="7.00" fill="#0b3f86" textLength="11.00" lengthAdjust="spacingAndGlyphs" font-weight="bold">123</text>
<path d="M386.5,148.5 h10.5 l3.5,3.5 v10 l-2,1.5 l-2,-1.5 l-2,1.5 l-2,-1.5 l-2,1.5 l-2,-1.5 l-2,1.5 z" fill="#8fc3ee" stroke="#2f78c0" stroke-width="1"/><path d="M397.0,148.5 v3.5 h3.5" fill="#fff" fill-opacity="0.6" stroke="#2f78c0" stroke-width="0.8"/><text x="387.60" y="158.60" font-size="7.00" fill="#0b3f86" textLength="11.00" lengthAdjust="spacingAndGlyphs" font-weight="bold">123</text>
<path d="M386.5,168.5 h10.5 l3.5,3.5 v10 l-2,1.5 l-2,-1.5 l-2,1.5 l-2,-1.5 l-2,1.5 l-2,-1.5 l-2,1.5 z" fill="#f3e08a" stroke="#b9a33a" stroke-width="1"/><path d="M397.0,168.5 v3.5 h3.5" fill="#fff" fill-opacity="0.6" stroke="#b9a33a" stroke-width="0.8"/><text x="388.00" y="179.00" font-size="9.00" fill="#5a4a00" textLength="9.50" lengthAdjust="spacingAndGlyphs" >ab</text>
<path d="M386.5,188.5 h10.5 l3.5,3.5 v10 l-2,1.5 l-2,-1.5 l-2,1.5 l-2,-1.5 l-2,1.5 l-2,-1.5 l-2,1.5 z" fill="#8fc3ee" stroke="#2f78c0" stroke-width="1"/><path d="M397.0,188.5 v3.5 h3.5" fill="#fff" fill-opacity="0.6" stroke="#2f78c0" stroke-width="0.8"/><text x="387.60" y="198.60" font-size="7.00" fill="#0b3f86" textLength="11.00" lengthAdjust="spacingAndGlyphs" font-weight="bold">123</text>
<path d="M386.5,208.5 h10.5 l3.5,3.5 v10 l-2,1.5 l-2,-1.5 l-2,1.5 l-2,-1.5 l-2,1.5 l-2,-1.5 l-2,1.5 z" fill="#8fc3ee" stroke="#2f78c0" stroke-width="1"/><path d="M397.0,208.5 v3.5 h3.5" fill="#fff" fill-opacity="0.6" stroke="#2f78c0" stroke-width="0.8"/><text x="387.60" y="218.60" font-size="7.00" fill="#0b3f86" textLength="11.00" lengthAdjust="spacingAndGlyphs" font-weight="bold">123</text>
<path d="M386.5,228.5 h10.5 l3.5,3.5 v10 l-2,1.5 l-2,-1.5 l-2,1.5 l-2,-1.5 l-2,1.5 l-2,-1.5 l-2,1.5 z" fill="#8fc3ee" stroke="#2f78c0" stroke-width="1"/><path d="M397.0,228.5 v3.5 h3.5" fill="#fff" fill-opacity="0.6" stroke="#2f78c0" stroke-width="0.8"/><text x="387.60" y="238.60" font-size="7.00" fill="#0b3f86" textLength="11.00" lengthAdjust="spacingAndGlyphs" font-weight="bold">123</text>
<path d="M386.5,248.5 h10.5 l3.5,3.5 v10 l-2,1.5 l-2,-1.5 l-2,1.5 l-2,-1.5 l-2,1.5 l-2,-1.5 l-2,1.5 z" fill="#7edc7e" stroke="#2a9a2a" stroke-width="1"/><path d="M397.0,248.5 v3.5 h3.5" fill="#fff" fill-opacity="0.6" stroke="#2a9a2a" stroke-width="0.8"/><path d="M388.5,258.0 l3,-0.5 l2.5,-4 l2.5,3 l3,0.5" fill="none" stroke="#0c5c0c" stroke-width="1.4"/>
<rect x="963.00" y="309.00" width="2.00" height="2.00" fill="#bfbfbf" />
<rect x="960.00" y="309.00" width="2.00" height="2.00" fill="#bfbfbf" />
<rect x="963.00" y="306.00" width="2.00" height="2.00" fill="#bfbfbf" />
<rect x="957.00" y="309.00" width="2.00" height="2.00" fill="#bfbfbf" />
<rect x="960.00" y="306.00" width="2.00" height="2.00" fill="#bfbfbf" />
<rect x="963.00" y="303.00" width="2.00" height="2.00" fill="#bfbfbf" />
</svg>
<div class="btn" style="left:848px;top:212px;width:103px;height:21px"></div>
<span class="t" style="left:887.60px;top:218px;font-size:10.159px;line-height:11px;height:11px;color:#000;transform:scaleY(1.1025);transform-origin:0 9px;">Load</span>
<div class="btn" style="left:848px;top:245px;width:103px;height:21px"></div>
<span class="t" style="left:887.60px;top:251px;font-size:10.266px;line-height:11px;height:11px;color:#000;transform:scaleY(1.0910);transform-origin:0 9px;">Save</span>
<div class="btn" style="left:724px;top:283px;width:73px;height:21px"></div>
<span class="t" style="left:752.50px;top:288px;font-size:10.589px;line-height:12px;height:12px;color:#000;transform:scaleY(1.0577);transform-origin:0 10px;">OK</span>
<div class="btn" style="left:805px;top:283px;width:73px;height:21px"></div>
<span class="t" style="left:824.30px;top:288px;font-size:10.601px;line-height:12px;height:12px;color:#000;transform:scaleY(1.0565);transform-origin:0 10px;">Cancel</span>
<div class="btn" style="left:886px;top:283px;width:73px;height:21px"></div>
<span class="t" style="left:908.20px;top:289px;font-size:10.182px;line-height:11px;height:11px;color:#000;transform:scaleY(1.0999);transform-origin:0 9px;">Reset</span>
</body></html>
